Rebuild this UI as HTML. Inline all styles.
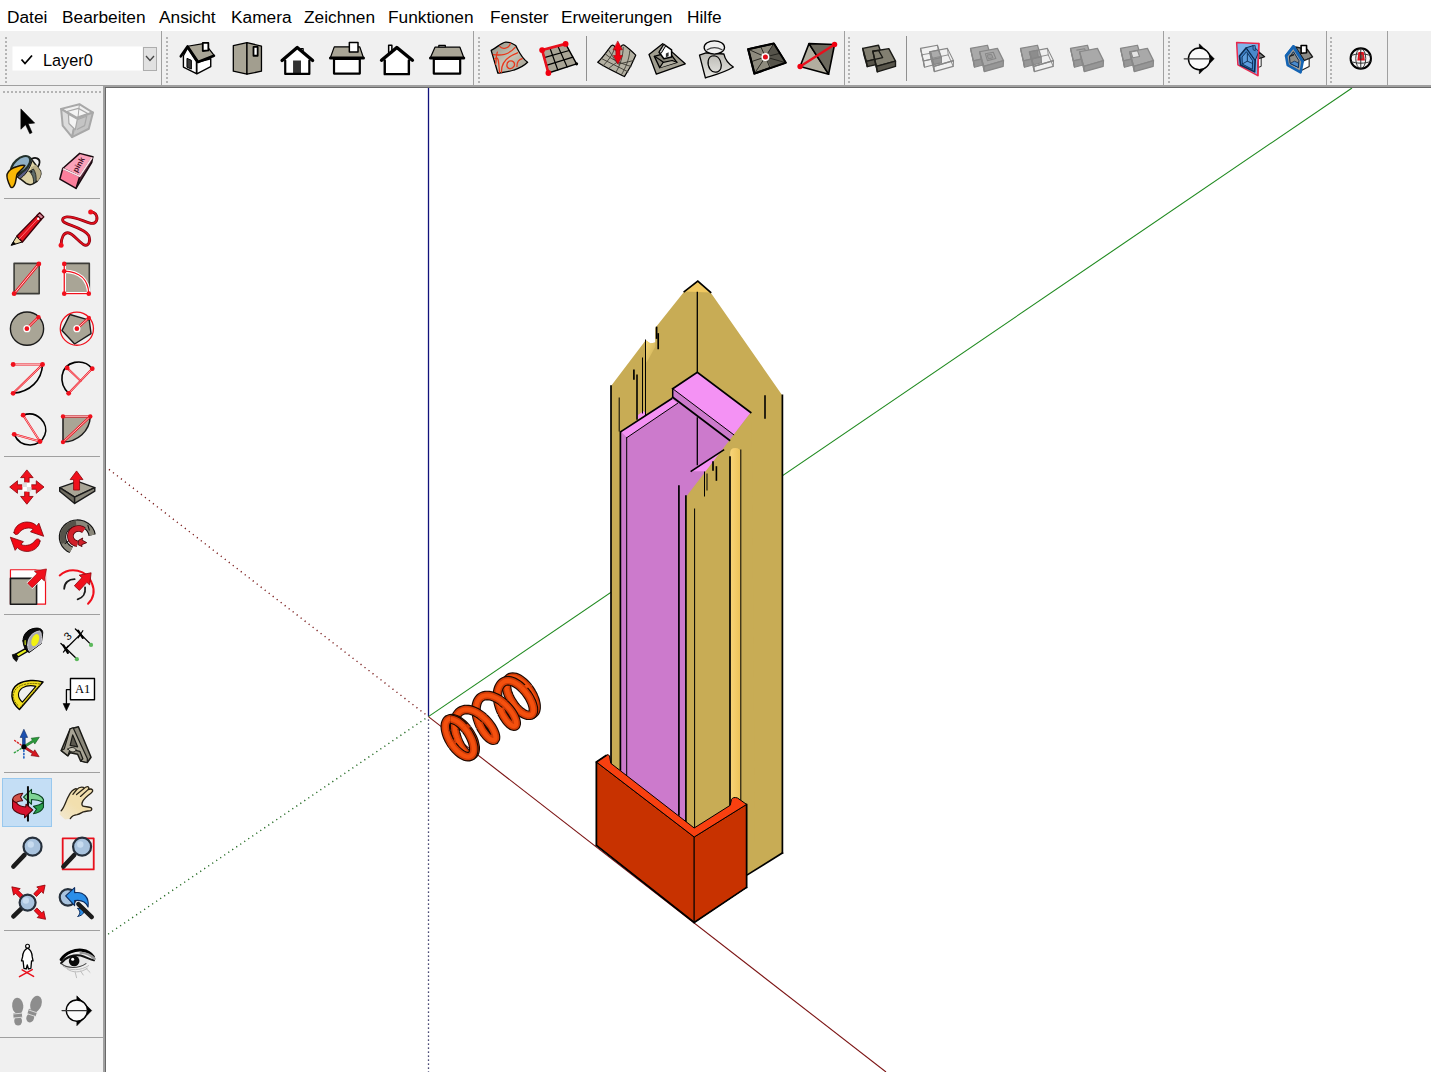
<!DOCTYPE html>
<html>
<head>
<meta charset="utf-8">
<style>
html,body{margin:0;padding:0;}
body{width:1431px;height:1072px;overflow:hidden;background:#f0f0f0;position:relative;font-family:"Liberation Sans",sans-serif;}
#menubar{position:absolute;left:0;top:0;width:1431px;height:31px;background:#fff;}
#menubar span{position:absolute;top:7.4px;font-size:17.3px;color:#000;white-space:nowrap;line-height:20px;}
#toolbar{position:absolute;left:0;top:31px;width:1431px;height:54px;background:#f0f0f0;}
#tbline{position:absolute;left:0;top:85px;width:1431px;height:1px;background:#a0a0a0;}
#fr1{position:absolute;left:103px;top:85px;width:1328px;height:987px;background:#a0a0a0;}
#fr2{position:absolute;left:105px;top:87px;width:1326px;height:985px;background:#696969;}
#left{position:absolute;left:0;top:86px;width:103px;height:986px;background:#f0f0f0;}
#vp{position:absolute;left:106px;top:88px;width:1325px;height:984px;background:#fff;overflow:hidden;}
.ico{position:absolute;}
.vsep{position:absolute;width:1px;background:#a0a0a0;}
.grip{position:absolute;width:2px;background-image:repeating-linear-gradient(to bottom,#b8b8b8 0,#b8b8b8 2px,transparent 2px,transparent 4px);}
.hgrip{position:absolute;height:2px;background-image:repeating-linear-gradient(to right,#b8b8b8 0,#b8b8b8 2px,transparent 2px,transparent 4px);}
.hsep{position:absolute;height:1px;background:#a0a0a0;left:6px;width:93px;}
</style>
</head>
<body>
<div id="menubar">
<span style="left:7px">Datei</span>
<span style="left:62px">Bearbeiten</span>
<span style="left:159px">Ansicht</span>
<span style="left:231px">Kamera</span>
<span style="left:304px">Zeichnen</span>
<span style="left:388px">Funktionen</span>
<span style="left:490px">Fenster</span>
<span style="left:561px">Erweiterungen</span>
<span style="left:687px">Hilfe</span>
</div>
<div id="toolbar">
<!--TOOLBAR-->
<svg width="1431" height="54" viewBox="0 31 1431 54" style="position:absolute;left:0;top:0">
<line x1="5.5" y1="37" x2="5.5" y2="83" stroke="#b4b4b4" stroke-width="2" stroke-dasharray="2 2" shape-rendering="crispEdges"/>
<line x1="161.5" y1="31" x2="161.5" y2="85" stroke="#a0a0a0" stroke-width="1" shape-rendering="crispEdges"/>
<line x1="473.5" y1="31" x2="473.5" y2="85" stroke="#a0a0a0" stroke-width="1" shape-rendering="crispEdges"/>
<line x1="844" y1="31" x2="844" y2="85" stroke="#a0a0a0" stroke-width="1" shape-rendering="crispEdges"/>
<line x1="1163.5" y1="31" x2="1163.5" y2="85" stroke="#a0a0a0" stroke-width="1" shape-rendering="crispEdges"/>
<line x1="1326" y1="31" x2="1326" y2="85" stroke="#a0a0a0" stroke-width="1" shape-rendering="crispEdges"/>
<line x1="1387.5" y1="31" x2="1387.5" y2="85" stroke="#a0a0a0" stroke-width="1" shape-rendering="crispEdges"/>
<line x1="166.5" y1="37" x2="166.5" y2="83" stroke="#b4b4b4" stroke-width="2" stroke-dasharray="2 2" shape-rendering="crispEdges"/>
<line x1="479" y1="37" x2="479" y2="83" stroke="#b4b4b4" stroke-width="2" stroke-dasharray="2 2" shape-rendering="crispEdges"/>
<line x1="849" y1="37" x2="849" y2="83" stroke="#b4b4b4" stroke-width="2" stroke-dasharray="2 2" shape-rendering="crispEdges"/>
<line x1="1169" y1="37" x2="1169" y2="83" stroke="#b4b4b4" stroke-width="2" stroke-dasharray="2 2" shape-rendering="crispEdges"/>
<line x1="1331" y1="37" x2="1331" y2="83" stroke="#b4b4b4" stroke-width="2" stroke-dasharray="2 2" shape-rendering="crispEdges"/>
<line x1="586.5" y1="36" x2="586.5" y2="81" stroke="#909090" stroke-width="1" shape-rendering="crispEdges"/>
<line x1="906.5" y1="36" x2="906.5" y2="81" stroke="#909090" stroke-width="1" shape-rendering="crispEdges"/>
<rect x="12.5" y="46.5" width="130" height="24" fill="#fff" stroke="none"/>
<rect x="143.5" y="47.5" width="13" height="23" fill="#e1e1e1" stroke="#adadad" stroke-width="1"/>
<polyline points="146,56 150,60.5 154,56" fill="none" stroke="#444" stroke-width="1.3"/>
<polyline points="21.5,59.5 25,63.5 32,55.5" fill="none" stroke="#000" stroke-width="1.8"/>
<text x="43" y="65.5" font-family="Liberation Sans, sans-serif" font-size="16.3" fill="#000">Layer0</text>
<polygon points="183.41,55.76 187.57,48.04 196.48,61.7 196.48,73.58 183.41,67.04" fill="#fff" stroke="#000" stroke-width="1.4" stroke-linejoin="round" />
<polygon points="196.84,62.29 210.74,58.73 210.74,66.69 196.84,73.82" fill="#fff" stroke="#000" stroke-width="1.4" stroke-linejoin="round" />
<polygon points="186.98,58.37 191.37,60.27 191.37,69.06 186.98,67.16" fill="#3a3a3a" stroke="#000" stroke-width="1" stroke-linejoin="round" />
<polygon points="187.57,46.26 204.8,43.29 214.3,55.52 198.02,61.94" fill="#a9a596" stroke="#000" stroke-width="1.2" stroke-linejoin="round" />
<polyline points="180.8,56.35 187.57,46.49 198.02,61.94 213.94,55.76" fill="none" stroke="#000" stroke-width="2.6" stroke-linejoin="round" stroke-linecap="round" />
<polygon points="202.78,42.93 208.36,42.93 208.36,50.41 202.78,51.01" fill="#fff" stroke="#000" stroke-width="1.8" stroke-linejoin="round" />
<polygon points="233.31,45.66 246.97,42.69 246.97,74.17 233.31,71.2" fill="#a9a596" stroke="#000" stroke-width="1.3" stroke-linejoin="round" />
<polygon points="246.97,42.69 261.46,46.02 261.46,71.2 246.97,74.17" fill="#a29e8f" stroke="#000" stroke-width="1.3" stroke-linejoin="round" />
<polygon points="253.5,46.85 257.66,46.85 257.66,55.76 253.5,55.76" fill="#fff" stroke="#000" stroke-width="1.8" stroke-linejoin="round" />
<polygon points="285.22,60.51 297.22,49.82 309.33,60.51 309.33,73.93 285.22,73.93" fill="#fff" stroke="none" stroke-width="0" stroke-linejoin="round" />
<polygon points="293.06,60.51 301.02,60.51 301.02,73.1 293.06,73.1" fill="#333" stroke="none" stroke-width="0" stroke-linejoin="round" />
<polyline points="285.22,60.51 285.22,73.93 309.33,73.93 309.33,60.51" fill="none" stroke="#000" stroke-width="2.2" stroke-linejoin="round" stroke-linecap="round" />
<polygon points="300.78,48.63 303.16,48.63 303.16,51.01 300.78,51.01" fill="#fff" stroke="#000" stroke-width="1.2" stroke-linejoin="round" />
<polyline points="282.01,60.51 297.22,47.44 312.66,60.51" fill="none" stroke="#000" stroke-width="3.2" stroke-linejoin="round" stroke-linecap="round" />
<polygon points="334.02,58.85 359.8,58.85 359.8,73.58 334.02,73.58" fill="#fff" stroke="#000" stroke-width="2.2" stroke-linejoin="round" />
<polygon points="334.26,46.85 359.8,46.85 363.36,57.54 330.45,57.54" fill="#a9a596" stroke="#000" stroke-width="1.2" stroke-linejoin="round" />
<polyline points="330.45,57.9 363.48,57.9" fill="none" stroke="#000" stroke-width="3" stroke-linejoin="round" stroke-linecap="round" />
<polygon points="349.34,42.45 358.01,42.45 358.01,51.96 349.34,51.96" fill="#fff" stroke="#000" stroke-width="1.5" stroke-linejoin="round" />
<polygon points="388.66,45.3 391.87,45.3 391.87,52.79 388.66,52.79" fill="#fff" stroke="#000" stroke-width="1.5" stroke-linejoin="round" />
<polygon points="384.74,60.51 396.86,49.82 408.86,60.51 408.86,74.17 384.74,74.17" fill="#fff" stroke="none" stroke-width="0" stroke-linejoin="round" />
<polyline points="384.74,60.51 384.74,74.17 408.86,74.17 408.86,60.51" fill="none" stroke="#000" stroke-width="2.4" stroke-linejoin="round" stroke-linecap="round" />
<polyline points="381.53,60.27 396.86,47.44 412.42,60.27" fill="none" stroke="#000" stroke-width="3.4" stroke-linejoin="round" stroke-linecap="round" />
<polygon points="438.79,45.3 445.33,45.3 445.33,47.44 438.79,47.44" fill="#fff" stroke="#000" stroke-width="1.2" stroke-linejoin="round" />
<polygon points="433.8,58.85 460.18,58.85 460.18,73.58 433.8,73.58" fill="#fff" stroke="#000" stroke-width="2.2" stroke-linejoin="round" />
<polygon points="434.99,47.21 459.94,47.21 463.74,57.54 430.48,57.54" fill="#a9a596" stroke="#000" stroke-width="1.2" stroke-linejoin="round" />
<polyline points="430.48,57.9 463.74,57.9" fill="none" stroke="#000" stroke-width="3" stroke-linejoin="round" stroke-linecap="round" />
<defs><linearGradient id="gterr" x1="0" y1="0" x2="1" y2="1"><stop offset="0" stop-color="#8f8c80"/><stop offset="0.5" stop-color="#c9c6b8"/><stop offset="1" stop-color="#9a978a"/></linearGradient><clipPath id="cterr"><path d="M 491.15,50.41 C 497.32,47.44 500.89,42.69 505.64,42.1 C 510.39,41.74 512.77,43.88 515.74,45.66 C 518.11,49.82 521.08,57.54 527.61,62.29 C 523.46,66.45 517.52,68.83 513.95,70.01 C 509.2,71.8 503.26,72.39 497.92,73.22 Z"/></clipPath></defs>
<path d="M 491.15,50.41 C 497.32,47.44 500.89,42.69 505.64,42.1 C 510.39,41.74 512.77,43.88 515.74,45.66 C 518.11,49.82 521.08,57.54 527.61,62.29 C 523.46,66.45 517.52,68.83 513.95,70.01 C 509.2,71.8 503.26,72.39 497.92,73.22 Z" fill="url(#gterr)" stroke="#000" stroke-width="1.3" stroke-linejoin="round" stroke-linecap="round" />
<g clip-path="url(#cterr)">
<path d="M 499.7,46.26 C 502.07,49.82 509.2,48.63 510.39,43.29" fill="none" stroke="#e8381c" stroke-width="1.3" stroke-linejoin="round" stroke-linecap="round" />
<path d="M 493.16,54.57 C 500.89,55.76 509.2,54.57 515.14,47.44" fill="none" stroke="#e8381c" stroke-width="1.3" stroke-linejoin="round" stroke-linecap="round" />
<path d="M 494.35,59.32 C 499.7,53.38 498.51,67.64 499.7,72.98" fill="none" stroke="#e8381c" stroke-width="1.3" stroke-linejoin="round" stroke-linecap="round" />
<path d="M 501.48,72.39 C 500.89,61.7 509.2,55.76 517.52,52.79" fill="none" stroke="#e8381c" stroke-width="1.3" stroke-linejoin="round" stroke-linecap="round" />
<path d="M 509.2,61.1 C 512.77,59.92 515.74,62.89 513.95,66.45 C 511.58,70.01 506.83,68.83 506.83,65.26 C 506.83,62.89 508.01,61.7 509.2,61.1" fill="none" stroke="#e8381c" stroke-width="1.3" stroke-linejoin="round" stroke-linecap="round" />
<path d="M 516.92,66.45 C 516.92,61.7 519.89,59.32 522.27,58.73" fill="none" stroke="#e8381c" stroke-width="1.3" stroke-linejoin="round" stroke-linecap="round" />
<path d="M 497.32,52.19 C 495.54,55.76 496.73,60.51 495.54,64.67" fill="none" stroke="#e8381c" stroke-width="1.3" stroke-linejoin="round" stroke-linecap="round" />
</g>
<polygon points="542.11,50.06 565.63,43.88 576.56,63.84 548.4,72.98" fill="#a9a596" stroke="#000" stroke-width="1.4" stroke-linejoin="round" />
<polyline points="549.95,48 557.79,69.93" fill="none" stroke="#000" stroke-width="1.2" stroke-linejoin="round" stroke-linecap="round" />
<polyline points="544.21,57.7 569.27,50.53" fill="none" stroke="#000" stroke-width="1.2" stroke-linejoin="round" stroke-linecap="round" />
<polyline points="557.79,45.94 567.17,66.89" fill="none" stroke="#000" stroke-width="1.2" stroke-linejoin="round" stroke-linecap="round" />
<polyline points="546.3,65.34 572.91,57.18" fill="none" stroke="#000" stroke-width="1.2" stroke-linejoin="round" stroke-linecap="round" />
<polyline points="548.4,72.98 542.11,50.06 565.63,43.88" fill="none" stroke="#e8101c" stroke-width="2.6" stroke-linejoin="round" stroke-linecap="round" />
<circle cx="542.11" cy="50.06" r="2.9" fill="#f00010" stroke="none" stroke-width="0"/>
<circle cx="565.63" cy="43.88" r="2.9" fill="#f00010" stroke="none" stroke-width="0"/>
<circle cx="548.4" cy="72.98" r="2.9" fill="#f00010" stroke="none" stroke-width="0"/>
<circle cx="576.56" cy="63.84" r="1.6" fill="#000" stroke="none" stroke-width="0"/>
<path d="M 597.7,62.29 C 603.05,57.54 607.8,49.82 611.36,45.66 C 614.33,43.88 615.52,47.44 617.3,54.57 C 619.68,47.44 622.06,43.88 624.43,45.3 C 629.18,48.63 632.75,52.19 635.72,55.16 C 632.75,62.89 627.99,71.2 624.43,76.55 C 616.12,72.39 605.42,67.64 597.7,62.29 Z" fill="#b3b0a2" stroke="#000" stroke-width="1.2" stroke-linejoin="round" stroke-linecap="round" />
<path d="M 601.86,58.73 C 610.18,62.89 619.68,67.64 627.99,71.8" fill="none" stroke="#3c3a32" stroke-width="0.9" stroke-linejoin="round" stroke-linecap="round" />
<path d="M 605.42,53.98 C 612.55,60.51 623.24,64.07 630.96,66.45" fill="none" stroke="#3c3a32" stroke-width="0.9" stroke-linejoin="round" stroke-linecap="round" />
<path d="M 608.39,49.82 C 612.55,55.76 616.12,62.89 618.49,64.07 C 623.24,62.89 629.18,61.7 633.7,60.51" fill="none" stroke="#3c3a32" stroke-width="0.9" stroke-linejoin="round" stroke-linecap="round" />
<path d="M 603.05,65.86 C 607.8,60.51 612.55,55.76 614.33,48.63" fill="none" stroke="#3c3a32" stroke-width="0.9" stroke-linejoin="round" stroke-linecap="round" />
<path d="M 608.99,68.23 C 613.74,64.07 616.71,62.89 617.9,61.7" fill="none" stroke="#3c3a32" stroke-width="0.9" stroke-linejoin="round" stroke-linecap="round" />
<path d="M 616.12,71.8 C 619.68,66.45 623.24,55.76 623.24,47.44" fill="none" stroke="#3c3a32" stroke-width="0.9" stroke-linejoin="round" stroke-linecap="round" />
<path d="M 621.46,74.77 C 625.62,67.64 629.18,59.32 629.78,51.01" fill="none" stroke="#3c3a32" stroke-width="0.9" stroke-linejoin="round" stroke-linecap="round" />
<path d="M 617.9,41.27 L 622.41,49.82 L 619.92,49.82 L 619.92,55.52 L 622.41,55.52 L 617.9,64.07 L 613.38,55.52 L 615.88,55.52 L 615.88,49.82 L 613.38,49.82 Z" fill="#f00010" stroke="#a00008" stroke-width="0.6" stroke-linejoin="round" stroke-linecap="round" />
<polygon points="649.01,54.57 662.67,43.64 685.24,63.84 656.37,74.17" fill="#a19e90" stroke="#000" stroke-width="1.3" stroke-linejoin="round" />
<path d="M 654.35,56.35 L 669.2,52.19 L 676.92,62.29 L 659.7,67.64 Z" fill="#8a877a" stroke="#000" stroke-width="1.3" stroke-linejoin="round" stroke-linecap="round" />
<path d="M 659.7,67.64 L 663.26,62.29 L 672.17,60.51 L 676.92,62.29" fill="#b5b2a4" stroke="#000" stroke-width="1.2" stroke-linejoin="round" stroke-linecap="round" />
<path d="M 654.35,56.35 L 660.29,59.92 L 663.26,62.29" fill="none" stroke="#000" stroke-width="1.2" stroke-linejoin="round" stroke-linecap="round" />
<polygon points="659.1,52.19 663.86,44.47 671.58,49.82 671.58,56.95 663.86,58.73" fill="#fff" stroke="#000" stroke-width="1.5" stroke-linejoin="round" />
<polygon points="659.1,52.19 663.86,44.47 665.64,46.02 661.12,53.38" fill="#c9c9c9" stroke="#000" stroke-width="1" stroke-linejoin="round" />
<polygon points="665.88,53.38 668.61,52.19 668.61,56.35 665.88,57.18" fill="#333" stroke="none" stroke-width="0" stroke-linejoin="round" />
<defs><linearGradient id="gdr" x1="0" y1="0" x2="0" y2="1"><stop offset="0" stop-color="#b9b8b2"/><stop offset="1" stop-color="#e8e8e4"/></linearGradient></defs>
<path d="M 699.49,55.16 L 706.03,52.79 L 723.85,53.98 C 725.03,59.32 728.6,64.07 733.35,67.04 C 725.03,72.39 715.53,74.77 705.43,77.97 Z" fill="url(#gdr)" stroke="#000" stroke-width="1.3" stroke-linejoin="round" stroke-linecap="round" />
<path d="M 714.11,55.76 C 720.28,56.35 722.06,64.07 720.88,68.23 C 719.09,72.98 713.16,73.58 710.19,69.42 C 706.62,64.07 707.22,55.76 714.11,55.76 Z" fill="none" stroke="#000" stroke-width="1.2" stroke-linejoin="round" stroke-linecap="round" />
<ellipse cx="714.34" cy="47.44" rx="10.2" ry="6.6" fill="#efefef" stroke="#000" stroke-width="1.3"/>
<path d="M 707.22,49.82 C 711.97,46.85 717.91,47.44 722.06,49.82" fill="none" stroke="#444" stroke-width="1.2" stroke-linejoin="round" stroke-linecap="round" />
<polygon points="748.2,49.22 773.74,43.52 785.62,62.65 754.38,73.58" fill="#8e8b7e" stroke="#000" stroke-width="2.2" stroke-linejoin="round" />
<polygon points="765.42,56.95 773.74,43.52 785.62,62.65 771.36,67.64" fill="#55534a" stroke="none" stroke-width="0" stroke-linejoin="round" />
<polyline points="765.42,56.95 748.2,49.22" fill="none" stroke="#1e1e1a" stroke-width="0.9" stroke-linejoin="round" stroke-linecap="round" />
<polyline points="765.42,56.95 773.74,43.52" fill="none" stroke="#1e1e1a" stroke-width="0.9" stroke-linejoin="round" stroke-linecap="round" />
<polyline points="765.42,56.95 785.62,62.65" fill="none" stroke="#1e1e1a" stroke-width="0.9" stroke-linejoin="round" stroke-linecap="round" />
<polyline points="765.42,56.95 754.38,73.58" fill="none" stroke="#1e1e1a" stroke-width="0.9" stroke-linejoin="round" stroke-linecap="round" />
<polyline points="765.42,56.95 760.67,46.49" fill="none" stroke="#1e1e1a" stroke-width="0.9" stroke-linejoin="round" stroke-linecap="round" />
<polyline points="765.42,56.95 751.17,61.7" fill="none" stroke="#1e1e1a" stroke-width="0.9" stroke-linejoin="round" stroke-linecap="round" />
<polyline points="765.42,56.95 770.18,68.23" fill="none" stroke="#1e1e1a" stroke-width="0.9" stroke-linejoin="round" stroke-linecap="round" />
<polyline points="765.42,56.95 779.68,53.38" fill="none" stroke="#1e1e1a" stroke-width="0.9" stroke-linejoin="round" stroke-linecap="round" />
<circle cx="765.42" cy="56.95" r="4.0" fill="#fff" stroke="none" stroke-width="0"/>
<circle cx="765.42" cy="56.95" r="2.5" fill="#e0101c" stroke="none" stroke-width="0"/>
<polygon points="748.2,49.22 773.74,43.52 785.62,62.65 754.38,73.58" fill="none" stroke="#000" stroke-width="1.8" stroke-linejoin="round" />
<polygon points="809.01,43.64 800.1,66.45 828.61,74.17" fill="#b2ae9f" stroke="#000" stroke-width="1.6" stroke-linejoin="round" />
<polygon points="809.01,43.64 834.55,44.47 828.61,74.17" fill="#6c695d" stroke="#000" stroke-width="1.6" stroke-linejoin="round" />
<polyline points="800.1,66.45 834.55,44.47" fill="none" stroke="#e8101c" stroke-width="2.4" stroke-linejoin="round" stroke-linecap="round" />
<circle cx="800.1" cy="66.45" r="2.7" fill="#f00010" stroke="none" stroke-width="0"/>
<circle cx="834.55" cy="44.47" r="2.7" fill="#f00010" stroke="none" stroke-width="0"/>
<polygon points="862.7,48.39 878.5,45.3 882.66,57.54 866.27,61.34" fill="#827f71" stroke="#1a1a16" stroke-width="1.4" stroke-linejoin="round" />
<polygon points="866.27,61.34 882.66,57.54 882.9,63.12 867.22,66.69" fill="#58554b" stroke="#1a1a16" stroke-width="1.4" stroke-linejoin="round" />
<polygon points="862.7,48.39 866.27,61.34 867.22,66.69 863.89,55.16" fill="#6e6b5e" stroke="#1a1a16" stroke-width="1.2" stroke-linejoin="round" />
<polygon points="872.8,51.24 888.84,48.63 895.49,61.1 876.36,66.45" fill="#827f71" stroke="#1a1a16" stroke-width="1.4" stroke-linejoin="round" />
<polygon points="876.36,66.45 895.49,61.1 895.49,66.45 877.31,71.8" fill="#58554b" stroke="#1a1a16" stroke-width="1.4" stroke-linejoin="round" />
<polygon points="872.8,51.24 876.36,66.45 877.31,71.8 874.58,59.92" fill="#6e6b5e" stroke="#1a1a16" stroke-width="1.2" stroke-linejoin="round" />
<polyline points="872.8,51.24 878.5,50.41 882.66,57.54 874.94,59.32" fill="none" stroke="#1a1a16" stroke-width="1.3" stroke-linejoin="round" stroke-linecap="round" />
<polygon points="920.48,48.37 937.46,45.22 941.13,56.96 923.42,60.95" fill="none" stroke="#878787" stroke-width="1.1" stroke-linejoin="round" />
<polygon points="923.42,60.95 941.13,56.96 941.45,62.73 924.47,67.24" fill="none" stroke="#878787" stroke-width="1.1" stroke-linejoin="round" />
<polygon points="920.48,48.37 923.42,60.95 924.47,67.24 921.74,54.87" fill="none" stroke="#878787" stroke-width="1.0" stroke-linejoin="round" />
<polyline points="921.74,54.87 938.51,51.72 941.45,62.73" fill="none" stroke="#878787" stroke-width="0.9" stroke-linejoin="round" stroke-linecap="round" />
<polyline points="938.51,51.72 937.46,45.22" fill="none" stroke="#878787" stroke-width="0.9" stroke-linejoin="round" stroke-linecap="round" />
<polygon points="930.44,51.72 938.3,50.15 941.45,57.49 932.54,59.58" fill="#ababab" stroke="#878787" stroke-width="1.1" stroke-linejoin="round" />
<polygon points="932.54,59.58 941.45,57.49 941.45,62.73 933.27,64.3" fill="#969696" stroke="#878787" stroke-width="1.1" stroke-linejoin="round" />
<polygon points="930.44,51.72 932.54,59.58 933.27,64.3 931.49,56.96" fill="#9e9e9e" stroke="#878787" stroke-width="1.0" stroke-linejoin="round" />
<polygon points="929.6,51.72 947.42,48.37 953.5,60.63 933.79,66.4" fill="none" stroke="#878787" stroke-width="1.1" stroke-linejoin="round" />
<polygon points="933.79,66.4 953.5,60.63 953.19,66.4 934.32,71.64" fill="none" stroke="#878787" stroke-width="1.1" stroke-linejoin="round" />
<polygon points="929.6,51.72 933.79,66.4 934.32,71.64 930.86,58.54" fill="none" stroke="#878787" stroke-width="1.0" stroke-linejoin="round" />
<polyline points="930.86,58.54 948.26,54.87 953.19,66.4" fill="none" stroke="#878787" stroke-width="0.9" stroke-linejoin="round" stroke-linecap="round" />
<polyline points="948.26,54.87 947.42,48.37" fill="none" stroke="#878787" stroke-width="0.9" stroke-linejoin="round" stroke-linecap="round" />
<polygon points="970.48,48.37 987.46,45.22 991.13,56.96 973.42,60.95" fill="#a9a9a9" stroke="#878787" stroke-width="1.2" stroke-linejoin="round" />
<polygon points="973.42,60.95 991.13,56.96 991.45,62.73 974.47,67.24" fill="#979797" stroke="#878787" stroke-width="1.2" stroke-linejoin="round" />
<polygon points="970.48,48.37 973.42,60.95 974.47,67.24 971.74,54.87" fill="#979797" stroke="#878787" stroke-width="1.0" stroke-linejoin="round" />
<polygon points="979.6,51.72 997.42,48.37 1003.5,60.63 983.79,66.4" fill="#a9a9a9" stroke="#878787" stroke-width="1.2" stroke-linejoin="round" />
<polygon points="983.79,66.4 1003.5,60.63 1003.19,66.4 984.32,71.64" fill="#979797" stroke="#878787" stroke-width="1.2" stroke-linejoin="round" />
<polygon points="979.6,51.72 983.79,66.4 984.32,71.64 980.86,58.54" fill="#979797" stroke="#878787" stroke-width="1.0" stroke-linejoin="round" />
<polygon points="985.37,53.82 993.23,52.25 995.85,58.54 987.46,60.63" fill="none" stroke="#878787" stroke-width="1.1" stroke-linejoin="round" />
<polygon points="987.04,55.08 991.45,54.24 993.02,57.8 988.51,58.85" fill="#9d9d9d" stroke="#878787" stroke-width="1.0" stroke-linejoin="round" />
<polygon points="1020.48,48.37 1037.46,45.22 1041.13,56.96 1023.42,60.95" fill="#a9a9a9" stroke="#878787" stroke-width="1.2" stroke-linejoin="round" />
<polygon points="1023.42,60.95 1041.13,56.96 1041.45,62.73 1024.47,67.24" fill="#979797" stroke="#878787" stroke-width="1.2" stroke-linejoin="round" />
<polygon points="1020.48,48.37 1023.42,60.95 1024.47,67.24 1021.74,54.87" fill="#979797" stroke="#878787" stroke-width="1.0" stroke-linejoin="round" />
<polygon points="1029.08,51.72 1037.46,50.15 1038.3,56.96 1031.49,59.58" fill="#8d8d8d" stroke="#878787" stroke-width="1.0" stroke-linejoin="round" />
<polygon points="1029.6,51.72 1047.42,48.37 1053.5,60.63 1033.79,66.4" fill="none" stroke="#878787" stroke-width="1.1" stroke-linejoin="round" />
<polygon points="1033.79,66.4 1053.5,60.63 1053.19,66.4 1034.32,71.64" fill="none" stroke="#878787" stroke-width="1.1" stroke-linejoin="round" />
<polygon points="1029.6,51.72 1033.79,66.4 1034.32,71.64 1030.86,58.54" fill="none" stroke="#878787" stroke-width="1.0" stroke-linejoin="round" />
<polyline points="1030.86,58.54 1048.26,54.87 1053.19,66.4" fill="none" stroke="#878787" stroke-width="0.9" stroke-linejoin="round" stroke-linecap="round" />
<polyline points="1048.26,54.87 1047.42,48.37" fill="none" stroke="#878787" stroke-width="0.9" stroke-linejoin="round" stroke-linecap="round" />
<polygon points="1070.48,48.37 1087.46,45.22 1091.13,56.96 1073.42,60.95" fill="#a9a9a9" stroke="#878787" stroke-width="1.2" stroke-linejoin="round" />
<polygon points="1073.42,60.95 1091.13,56.96 1091.45,62.73 1074.47,67.24" fill="#979797" stroke="#878787" stroke-width="1.2" stroke-linejoin="round" />
<polygon points="1070.48,48.37 1073.42,60.95 1074.47,67.24 1071.74,54.87" fill="#979797" stroke="#878787" stroke-width="1.0" stroke-linejoin="round" />
<polyline points="1076.77,50.15 1084.63,48.79 1086.21,53.3" fill="none" stroke="#878787" stroke-width="1.1" stroke-linejoin="round" stroke-linecap="round" />
<polygon points="1079.6,51.72 1097.42,48.37 1103.5,60.63 1083.79,66.4" fill="#a9a9a9" stroke="#878787" stroke-width="1.2" stroke-linejoin="round" />
<polygon points="1083.79,66.4 1103.5,60.63 1103.19,66.4 1084.32,71.64" fill="#979797" stroke="#878787" stroke-width="1.2" stroke-linejoin="round" />
<polygon points="1079.6,51.72 1083.79,66.4 1084.32,71.64 1080.86,58.54" fill="#979797" stroke="#878787" stroke-width="1.0" stroke-linejoin="round" />
<polygon points="1120.48,48.37 1137.46,45.22 1141.13,56.96 1123.42,60.95" fill="#a9a9a9" stroke="#878787" stroke-width="1.2" stroke-linejoin="round" />
<polygon points="1123.42,60.95 1141.13,56.96 1141.45,62.73 1124.47,67.24" fill="#979797" stroke="#878787" stroke-width="1.2" stroke-linejoin="round" />
<polygon points="1120.48,48.37 1123.42,60.95 1124.47,67.24 1121.74,54.87" fill="#979797" stroke="#878787" stroke-width="1.0" stroke-linejoin="round" />
<polygon points="1129.6,51.72 1147.42,48.37 1153.5,60.63 1133.79,66.4" fill="#a9a9a9" stroke="#878787" stroke-width="1.2" stroke-linejoin="round" />
<polygon points="1133.79,66.4 1153.5,60.63 1153.19,66.4 1134.32,71.64" fill="#979797" stroke="#878787" stroke-width="1.2" stroke-linejoin="round" />
<polygon points="1129.6,51.72 1133.79,66.4 1134.32,71.64 1130.86,58.54" fill="#979797" stroke="#878787" stroke-width="1.0" stroke-linejoin="round" />
<polygon points="1130.96,51.93 1137.46,50.68 1139.56,56.44 1132.85,57.8" fill="#e4e4e4" stroke="#878787" stroke-width="1.1" stroke-linejoin="round" />
<polygon points="1199.32,43.86 1214.31,58.85 1199.32,73.95" fill="#000" stroke="#000" stroke-width="0.5" stroke-linejoin="round" />
<circle cx="1199.32" cy="58.85" r="10.9" fill="#fafafa" stroke="#000" stroke-width="1.4"/>
<polyline points="1184.22,58.85 1209.8,58.85" fill="none" stroke="#333" stroke-width="1.3" stroke-linejoin="round" stroke-linecap="round" />
<polygon points="1236.64,42.5 1258.86,43.55 1257.81,75.62 1237.89,64.83" fill="#7fb4ea" stroke="#e8284c" stroke-width="1.5" stroke-linejoin="round" />
<polygon points="1239.47,55.92 1246.28,47.74 1255.19,60.32 1254.66,71.85 1240.51,65.04" fill="#3f82c8" stroke="#0a2a50" stroke-width="1.6" stroke-linejoin="round" />
<polygon points="1242.09,56.96 1246.49,51.72 1252.57,60.63 1252.36,69.33 1242.3,64.09" fill="#5c9cdc" stroke="#0a2a50" stroke-width="0.9" stroke-linejoin="round" />
<polyline points="1242.09,64.09 1247.33,61.16 1252.36,63.46" fill="none" stroke="#0a2a50" stroke-width="0.9" stroke-linejoin="round" stroke-linecap="round" />
<polyline points="1247.33,61.16 1247.33,53.82" fill="none" stroke="#0a2a50" stroke-width="0.9" stroke-linejoin="round" stroke-linecap="round" />
<polygon points="1246.28,47.74 1253.09,45.64 1258.86,51.72 1255.19,60.32" fill="#4a8acc" stroke="#0a2a50" stroke-width="1.0" stroke-linejoin="round" />
<polygon points="1253.09,45.64 1255.19,45.64 1255.19,50.68 1253.09,49.63" fill="#5c9cdc" stroke="#0a2a50" stroke-width="0.8" stroke-linejoin="round" />
<polygon points="1258.54,51.72 1264.62,56.75 1258.54,58.85" fill="#777" stroke="#111" stroke-width="1.2" stroke-linejoin="round" />
<polygon points="1258.54,58.85 1261.16,58.01 1261.16,66.4 1258.02,67.45" fill="#fff" stroke="#222" stroke-width="1" stroke-linejoin="round" />
<polyline points="1258.86,43.55 1257.81,75.62" fill="none" stroke="#e8284c" stroke-width="1.5" stroke-linejoin="round" stroke-linecap="round" />
<polygon points="1295.55,47.01 1307.29,49.42 1312.53,56.96 1304.45,60.95" fill="#8a8a86" stroke="#1a1a1a" stroke-width="1.4" stroke-linejoin="round" />
<polygon points="1301.1,45.43 1306.55,45.43 1306.55,52.77 1301.1,53.3" fill="#fff" stroke="#000" stroke-width="1.6" stroke-linejoin="round" />
<polygon points="1302.36,61.37 1309.17,58.54 1309.17,66.61 1300.79,70.8" fill="#fff" stroke="#222" stroke-width="1.1" stroke-linejoin="round" />
<polygon points="1286.11,55.92 1293.45,46.48 1302.67,61.37 1300.58,72.37 1287.68,65.04" fill="#9b9b98" stroke="#1464b4" stroke-width="2.6" stroke-linejoin="round" />
<polygon points="1289.47,56.96 1293.45,51.72 1298.9,60.63 1298.48,67.45 1290.09,63.46" fill="#8c8c88" stroke="#0a2a50" stroke-width="1.0" stroke-linejoin="round" />
<polygon points="1290.09,63.46 1294.5,61.16 1298.48,63.04 1298.48,67.45" fill="#4a8acc" stroke="#0a2a50" stroke-width="0.8" stroke-linejoin="round" />
<polygon points="1289.47,55.39 1293.97,53.82 1293.97,55.39 1289.47,56.96" fill="#222" stroke="none" stroke-width="0" stroke-linejoin="round" />
<polyline points="1286.11,55.92 1293.45,46.48 1302.67,61.37" fill="none" stroke="#1464b4" stroke-width="2.8" stroke-linejoin="round" stroke-linecap="round" />
<circle cx="1360.76" cy="58.52" r="10.2" fill="#f4f4f4" stroke="#000" stroke-width="2"/>
<ellipse cx="1360.76" cy="58.52" rx="5" ry="10" fill="none" stroke="#222" stroke-width="0.9"/>
<path d="M 1350.91,55.67 C 1356.97,53.21 1364.55,53.21 1370.61,55.67" fill="none" stroke="#222" stroke-width="0.9" stroke-linejoin="round" stroke-linecap="round" />
<path d="M 1350.53,61.36 C 1356.97,63.82 1364.55,63.82 1370.98,61.36" fill="none" stroke="#222" stroke-width="0.9" stroke-linejoin="round" stroke-linecap="round" />
<polygon points="1358.48,51.89 1363.6,51.89 1364.92,60.41 1357.35,60.41" fill="#e0101c" stroke="none" stroke-width="0" stroke-linejoin="round" />
<polygon points="1359.81,54.73 1362.65,54.73 1363.03,58.52 1359.24,58.52" fill="#8a5a50" stroke="none" stroke-width="0" stroke-linejoin="round" />
<path d="M 1360.76,48.67 L 1360.76,68.36" fill="none" stroke="#222" stroke-width="0.9" stroke-linejoin="round" stroke-linecap="round" />
</svg>
<!--/TOOLBAR-->
</div>
<div id="tbline"></div>
<div id="left">
<!--LEFT-->
<svg width="103" height="986" viewBox="0 86 103 986" style="position:absolute;left:0;top:0">
<line x1="3" y1="91.5" x2="101" y2="91.5" stroke="#b4b4b4" stroke-width="2" stroke-dasharray="2 2" shape-rendering="crispEdges"/>
<line x1="4" y1="198.5" x2="100" y2="198.5" stroke="#a0a0a0" stroke-width="1" shape-rendering="crispEdges"/>
<line x1="4" y1="456.5" x2="100" y2="456.5" stroke="#a0a0a0" stroke-width="1" shape-rendering="crispEdges"/>
<line x1="4" y1="614.5" x2="100" y2="614.5" stroke="#a0a0a0" stroke-width="1" shape-rendering="crispEdges"/>
<line x1="4" y1="772.5" x2="100" y2="772.5" stroke="#a0a0a0" stroke-width="1" shape-rendering="crispEdges"/>
<line x1="4" y1="930.5" x2="100" y2="930.5" stroke="#a0a0a0" stroke-width="1" shape-rendering="crispEdges"/>
<line x1="0" y1="1037.5" x2="104" y2="1037.5" stroke="#a0a0a0" stroke-width="1" shape-rendering="crispEdges"/>
<polygon points="20.89,108.89 20.89,129.26 25.59,124.77 29.77,133.65 32.07,132.6 28.2,123.73 34.68,123.1" fill="#000" stroke="#000" stroke-width="0.6" stroke-linejoin="round" />
<polygon points="61.11,108.89 79.39,104.19 92.97,112.55 76.26,118.29" fill="none" stroke="#a8a8a8" stroke-width="2" stroke-linejoin="round" />
<polygon points="61.11,108.89 76.26,118.29 72.08,137.1 62.68,125.61" fill="#dcdcdc" stroke="#a8a8a8" stroke-width="2" stroke-linejoin="round" />
<polygon points="76.26,118.29 92.97,112.55 88.79,128.74 72.08,137.1" fill="#c4c4c4" stroke="#a8a8a8" stroke-width="2" stroke-linejoin="round" />
<polygon points="66.85,111.5 78.35,108.37 87.75,113.59 76.78,117.25" fill="#f4f4f4" stroke="#a8a8a8" stroke-width="1.2" stroke-linejoin="round" />
<polygon points="68.42,114.12 77.3,119.34 75.21,129.78 68.94,123.52" fill="#f4f4f4" stroke="#a8a8a8" stroke-width="1.2" stroke-linejoin="round" />
<polyline points="77.82,119.34 86.7,116.2 84.61,125.61 77.3,129.26" fill="none" stroke="#a8a8a8" stroke-width="1.2" stroke-linejoin="round" stroke-linecap="round" />
<polyline points="79.39,104.19 77.82,119.34" fill="none" stroke="#a8a8a8" stroke-width="1" stroke-linejoin="round" stroke-linecap="round" />
<path d="M 31.87,158.85 C 35.53,156.76 39.71,158.58 39.6,162.24 C 39.45,165.9 36.57,168.51 33.44,169.56" fill="none" stroke="#111" stroke-width="1.7" stroke-linejoin="round" stroke-linecap="round" />
<path d="M 30.56,158.06 L 40.49,171.12 C 41.8,174.26 39.71,180.53 33.44,183.66 C 30.83,185.23 28.21,184.71 26.12,183.4 L 17.5,176.61 Z" fill="#ddd2a4" stroke="#1a1a14" stroke-width="1.5" stroke-linejoin="round" stroke-linecap="round" />
<path d="M 30.83,167.47 L 36.05,164.85 L 40.49,171.12 C 41.54,174.26 40.23,178.44 37.62,181.05 L 33.44,178.44 Z" fill="#b9ae86" stroke="none" stroke-width="0" stroke-linejoin="round" stroke-linecap="round" />
<path d="M 29.26,171.38 L 33.44,169.03 C 35.53,172.17 36.57,176.35 36.05,181.57 L 33.44,183.4 C 33.96,178.44 32.39,174.26 29.26,171.38 Z" fill="#5d6a68" stroke="#1a1a14" stroke-width="0.8" stroke-linejoin="round" stroke-linecap="round" />
<path d="M 17.5,176.61 C 21.94,174.26 27.17,168.51 30.56,158.06 L 32.13,160.67 C 29.78,169.56 24.56,175.83 20.11,178.7 Z" fill="#595d84" stroke="#1a1a14" stroke-width="1.0" stroke-linejoin="round" stroke-linecap="round" />
<ellipse cx="20.64" cy="165.11" rx="11.6" ry="6.4" transform="rotate(-42 20.64 165.11)" fill="#8fb0c6" stroke="#22302a" stroke-width="2.2"/>
<circle cx="31.35" cy="171.65" r="1.0" fill="#111" stroke="none" stroke-width="0"/>
<path d="M 7.05,174.26 C 8.36,170.6 13.06,167.47 17.24,166.42 C 19.85,165.64 22.47,165.11 24.82,165.48 C 23.51,167.99 19.85,171.12 17.5,173.47 C 15.67,176.35 16.72,181.57 14.11,185.75 C 13.06,187.84 11.23,188.1 10.19,186.27 C 8.36,182.62 6.27,178.44 7.05,174.26 Z" fill="#f9b806" stroke="#1a1206" stroke-width="1.5" stroke-linejoin="round" stroke-linecap="round" />
<polygon points="79.69,176.35 92.75,156.76 91.81,162.24 76.03,188.36" fill="#5a2c3c" stroke="#1a0a10" stroke-width="1.5" stroke-linejoin="round" />
<polygon points="62.71,168.51 79.69,153.36 92.75,156.76 79.69,176.35" fill="#fba2ba" stroke="#1a0a10" stroke-width="1.5" stroke-linejoin="round" />
<polygon points="62.71,168.51 79.69,176.35 76.03,188.36 59.84,179.22" fill="#fb7f9c" stroke="#1a0a10" stroke-width="1.5" stroke-linejoin="round" />
<polyline points="63.6,169.03 79.59,176.35 91.81,157.96" fill="none" stroke="#fde0e8" stroke-width="1.7" stroke-linejoin="round" stroke-linecap="round" />
<text x="78.38" y="164.44" font-family="Liberation Sans, sans-serif" font-size="7.8" font-weight="bold" fill="#4a1428" text-anchor="middle" transform="rotate(-60 78.38 164.44) translate(0 3)">pink</text>
<polygon points="11.28,245.31 16.71,236.22 22.46,241.96" fill="#ead9a4" stroke="#000" stroke-width="1" stroke-linejoin="round" />
<polygon points="11.28,245.31 13.37,241.75 15.46,243.84" fill="#000" stroke="#000" stroke-width="0.5" stroke-linejoin="round" />
<polygon points="16.71,236.22 37.08,215.33 41.26,219.5 22.46,241.96" fill="#e0101c" stroke="#3a0008" stroke-width="1.3" stroke-linejoin="round" />
<polyline points="19.33,238.83 39.17,217.41" fill="none" stroke="#ff6a70" stroke-width="1" stroke-linejoin="round" stroke-linecap="round" />
<polygon points="37.08,215.33 39.69,212.71 43.87,216.89 41.26,219.5" fill="#d98a9c" stroke="#3a0008" stroke-width="1.3" stroke-linejoin="round" />
<circle cx="38.23" cy="218.77" r="1.2" fill="#fff" stroke="none" stroke-width="0"/>
<path d="M 61.11,245.1 C 61.11,237.78 63.72,232.56 67.9,232.77 C 73.12,233.08 79.39,243.01 84.61,245.1 C 88.79,246.14 90.88,240.92 88.79,235.69 C 85.66,229.43 73.12,226.29 65.81,223.16 C 61.11,221.07 61.63,217.41 66.85,216.89 C 75.21,216.37 83.57,221.59 90.88,223.37 C 96.63,224.2 98.72,218.46 95.58,213.97 C 94.01,212.19 92.45,211.67 90.67,211.88" fill="none" stroke="#8a0010" stroke-width="2.8" stroke-linejoin="round" stroke-linecap="round" />
<path d="M 61.11,245.1 C 61.11,237.78 63.72,232.56 67.9,232.77 C 73.12,233.08 79.39,243.01 84.61,245.1 C 88.79,246.14 90.88,240.92 88.79,235.69 C 85.66,229.43 73.12,226.29 65.81,223.16 C 61.11,221.07 61.63,217.41 66.85,216.89 C 75.21,216.37 83.57,221.59 90.88,223.37 C 96.63,224.2 98.72,218.46 95.58,213.97 C 94.01,212.19 92.45,211.67 90.67,211.88" fill="none" stroke="#e0101c" stroke-width="1.5" stroke-linejoin="round" stroke-linecap="round" />
<circle cx="61.11" cy="245.31" r="2.5" fill="#f0101c" stroke="none" stroke-width="0"/>
<circle cx="90.67" cy="211.88" r="2.5" fill="#f0101c" stroke="none" stroke-width="0"/>
<polygon points="14.1,263.38 39.17,263.38 39.17,293.67 14.1,293.67" fill="#a9a596" stroke="#3c3c38" stroke-width="1.6" stroke-linejoin="round" />
<polyline points="14.1,293.67 38.86,263.9" fill="none" stroke="#f0101c" stroke-width="2.6" stroke-linejoin="round" stroke-linecap="round" />
<polyline points="14.1,293.67 38.86,263.9" fill="none" stroke="#fff" stroke-width="0.8580000000000001" stroke-linejoin="round" stroke-linecap="round" />
<circle cx="14.1" cy="293.67" r="2.4" fill="#f0101c" stroke="none" stroke-width="0"/>
<circle cx="38.86" cy="263.9" r="2.4" fill="#f0101c" stroke="none" stroke-width="0"/>
<polygon points="64.24,263.38 89.31,263.38 89.31,293.67 64.24,293.67" fill="#a9a596" stroke="#3c3c38" stroke-width="1.6" stroke-linejoin="round" />
<path d="M 64.24,271.21 C 79.39,271.73 88.27,279.57 88.79,293.67" fill="none" stroke="#fff" stroke-width="3.4" stroke-linejoin="round" stroke-linecap="round" />
<path d="M 64.24,271.21 C 79.39,271.73 88.27,279.57 88.79,293.67" fill="none" stroke="#f0101c" stroke-width="1.3" stroke-linejoin="round" stroke-linecap="round" />
<polyline points="64.24,263.9 64.24,293.67 88.79,293.67" fill="none" stroke="#fff" stroke-width="3.4" stroke-linejoin="round" stroke-linecap="round" />
<polyline points="64.24,263.9 64.24,293.67 88.79,293.67" fill="none" stroke="#f0101c" stroke-width="1.3" stroke-linejoin="round" stroke-linecap="round" />
<circle cx="64.24" cy="263.9" r="2.3" fill="#f0101c" stroke="none" stroke-width="0"/>
<circle cx="64.24" cy="271.21" r="2.3" fill="#f0101c" stroke="none" stroke-width="0"/>
<circle cx="64.24" cy="293.67" r="2.3" fill="#f0101c" stroke="none" stroke-width="0"/>
<circle cx="88.79" cy="293.67" r="2.3" fill="#f0101c" stroke="none" stroke-width="0"/>
<circle cx="27.01" cy="328.66" r="16.6" fill="#a9a596" stroke="#1a1a1a" stroke-width="1.4"/>
<polyline points="26.87,328.66 38.51,317.16" fill="none" stroke="#f0101c" stroke-width="2.4" stroke-linejoin="round" stroke-linecap="round" />
<polyline points="26.87,328.66 38.51,317.16" fill="none" stroke="#fff" stroke-width="0.792" stroke-linejoin="round" stroke-linecap="round" />
<circle cx="38.51" cy="317.16" r="2.2" fill="#f0101c" stroke="none" stroke-width="0"/>
<circle cx="26.87" cy="328.66" r="3.5999999999999996" fill="#fff" stroke="none" stroke-width="0"/>
<circle cx="26.87" cy="328.66" r="2.3" fill="#f0101c" stroke="none" stroke-width="0"/>
<polygon points="69.85,314.48 89.25,320.15 91.04,333.58 74.63,344.03 61.94,330.6" fill="#a9a596" stroke="#1a1a1a" stroke-width="1.4" stroke-linejoin="round" />
<circle cx="76.87" cy="328.66" r="16.6" fill="none" stroke="#f0101c" stroke-width="1.3"/>
<polyline points="76.87,328.66 88.81,317.91" fill="none" stroke="#f0101c" stroke-width="2.4" stroke-linejoin="round" stroke-linecap="round" />
<polyline points="76.87,328.66 88.81,317.91" fill="none" stroke="#fff" stroke-width="0.792" stroke-linejoin="round" stroke-linecap="round" />
<circle cx="88.81" cy="317.91" r="2.2" fill="#f0101c" stroke="none" stroke-width="0"/>
<circle cx="76.87" cy="328.66" r="3.5999999999999996" fill="#fff" stroke="none" stroke-width="0"/>
<circle cx="76.87" cy="328.66" r="2.3" fill="#f0101c" stroke="none" stroke-width="0"/>
<path d="M 42.54,364.48 C 41.79,380.6 29.85,391.79 13.13,393.28" fill="none" stroke="#000" stroke-width="1.6" stroke-linejoin="round" stroke-linecap="round" />
<polyline points="13.13,364.48 42.54,364.48 13.13,393.28" fill="none" stroke="#f0101c" stroke-width="2.0" stroke-linejoin="round" stroke-linecap="round" />
<polyline points="13.13,364.48 42.54,364.48 13.13,393.28" fill="none" stroke="#fff" stroke-width="0.66" stroke-linejoin="round" stroke-linecap="round" />
<circle cx="13.13" cy="364.48" r="2.4" fill="#f0101c" stroke="none" stroke-width="0"/>
<circle cx="42.54" cy="364.48" r="2.4" fill="#f0101c" stroke="none" stroke-width="0"/>
<circle cx="13.13" cy="393.28" r="2.4" fill="#f0101c" stroke="none" stroke-width="0"/>
<path d="M 68.66,393.28 C 58.21,383.58 59.7,365.67 74.63,362.39 C 82.09,360.9 88.06,363.43 92.24,368.66" fill="none" stroke="#000" stroke-width="1.6" stroke-linejoin="round" stroke-linecap="round" />
<polyline points="68.66,393.28 92.24,368.66" fill="none" stroke="#f0101c" stroke-width="2.0" stroke-linejoin="round" stroke-linecap="round" />
<polyline points="68.66,393.28 92.24,368.66" fill="none" stroke="#fff" stroke-width="0.66" stroke-linejoin="round" stroke-linecap="round" />
<polyline points="67.16,367.91 80.6,380.9" fill="none" stroke="#f0101c" stroke-width="2.0" stroke-linejoin="round" stroke-linecap="round" />
<polyline points="67.16,367.91 80.6,380.9" fill="none" stroke="#fff" stroke-width="0.66" stroke-linejoin="round" stroke-linecap="round" />
<circle cx="67.16" cy="367.91" r="2.4" fill="#f0101c" stroke="none" stroke-width="0"/>
<circle cx="92.24" cy="368.66" r="2.4" fill="#f0101c" stroke="none" stroke-width="0"/>
<circle cx="68.66" cy="393.28" r="2.4" fill="#f0101c" stroke="none" stroke-width="0"/>
<path d="M 23.13,415.22 C 37.31,409.7 49.25,423.88 44.78,435.07 C 40.3,447.76 20.9,449.25 14.18,434.33" fill="none" stroke="#000" stroke-width="1.6" stroke-linejoin="round" stroke-linecap="round" />
<polyline points="23.13,415.22 40,441.49" fill="none" stroke="#f0101c" stroke-width="2.0" stroke-linejoin="round" stroke-linecap="round" />
<polyline points="23.13,415.22 40,441.49" fill="none" stroke="#fff" stroke-width="0.66" stroke-linejoin="round" stroke-linecap="round" />
<polyline points="14.18,434.33 40,441.49" fill="none" stroke="#f0101c" stroke-width="2.0" stroke-linejoin="round" stroke-linecap="round" />
<polyline points="14.18,434.33 40,441.49" fill="none" stroke="#fff" stroke-width="0.66" stroke-linejoin="round" stroke-linecap="round" />
<circle cx="23.13" cy="415.22" r="2.4" fill="#f0101c" stroke="none" stroke-width="0"/>
<circle cx="14.18" cy="434.33" r="2.4" fill="#f0101c" stroke="none" stroke-width="0"/>
<circle cx="40.0" cy="441.49" r="2.4" fill="#f0101c" stroke="none" stroke-width="0"/>
<path d="M 62.99,416.42 L 90.3,416.42 C 89.55,431.34 77.61,441.79 62.99,442.09 Z" fill="#a9a596" stroke="#1a1a1a" stroke-width="1.5" stroke-linejoin="round" stroke-linecap="round" />
<polyline points="62.99,416.42 90.3,416.42" fill="none" stroke="#f0101c" stroke-width="2.0" stroke-linejoin="round" stroke-linecap="round" />
<polyline points="62.99,416.42 90.3,416.42" fill="none" stroke="#fff" stroke-width="0.66" stroke-linejoin="round" stroke-linecap="round" />
<polyline points="90.3,416.42 62.99,442.09" fill="none" stroke="#f0101c" stroke-width="2.4" stroke-linejoin="round" stroke-linecap="round" />
<polyline points="90.3,416.42 62.99,442.09" fill="none" stroke="#fff" stroke-width="0.792" stroke-linejoin="round" stroke-linecap="round" />
<circle cx="62.99" cy="416.42" r="2.2" fill="#f0101c" stroke="none" stroke-width="0"/>
<circle cx="90.3" cy="416.42" r="2.2" fill="#f0101c" stroke="none" stroke-width="0"/>
<circle cx="62.99" cy="442.09" r="2.2" fill="#f0101c" stroke="none" stroke-width="0"/>
<polygon points="31.04,489.28 36.27,489.28 36.27,493.31 44.03,487.04 36.27,480.78 36.27,484.81 31.04,484.81" fill="#f0101c" stroke="#8a0008" stroke-width="0.8" stroke-linejoin="round" />
<polygon points="24.63,491.22 24.63,496.45 20.6,496.45 26.87,504.21 33.13,496.45 29.1,496.45 29.1,491.22" fill="#f0101c" stroke="#8a0008" stroke-width="0.8" stroke-linejoin="round" />
<polygon points="22.69,484.81 17.46,484.81 17.46,480.78 9.7,487.04 17.46,493.31 17.46,489.28 22.69,489.28" fill="#f0101c" stroke="#8a0008" stroke-width="0.8" stroke-linejoin="round" />
<polygon points="29.1,482.87 29.1,477.64 33.13,477.64 26.87,469.88 20.6,477.64 24.63,477.64 24.63,482.87" fill="#f0101c" stroke="#8a0008" stroke-width="0.8" stroke-linejoin="round" />
<polygon points="22.39,482.57 31.34,482.57 31.34,491.52 22.39,491.52" fill="#fff" stroke="none" stroke-width="0" stroke-linejoin="round" />
<polygon points="22.39,482.57 26.87,482.57 26.87,487.04 22.39,487.04" fill="#ddd" stroke="none" stroke-width="0" stroke-linejoin="round" />
<polygon points="26.87,487.04 31.34,487.04 31.34,491.52 26.87,491.52" fill="#ddd" stroke="none" stroke-width="0" stroke-linejoin="round" />
<polygon points="59.7,487.64 77.61,481.37 94.78,487.64 74.63,497.04" fill="#a9a596" stroke="#1a1a1a" stroke-width="1.4" stroke-linejoin="round" />
<polygon points="59.7,487.64 74.63,497.04 74.63,503.46 59.7,491.22" fill="#6f6c60" stroke="#1a1a1a" stroke-width="1.4" stroke-linejoin="round" />
<polygon points="74.63,497.04 94.78,487.64 94.78,491.22 74.63,503.46" fill="#8a877a" stroke="#1a1a1a" stroke-width="1.4" stroke-linejoin="round" />
<polygon points="79.55,490.03 79.55,479.58 82.99,479.58 76.57,470.93 70.15,479.58 73.58,479.58 73.58,490.03" fill="#f0101c" stroke="#8a0008" stroke-width="0.8" stroke-linejoin="round" />
<path d="M 13.99,532.38 C 14.55,526.23 20.71,522.03 26.86,522.03 C 31.34,522.03 34.7,523.71 36.65,525.95 L 38.89,523.15 L 43.65,536.3 L 30.5,531.82 L 33.02,529.31 C 31.34,528.02 29.1,527.91 26.86,528.19 C 23.5,528.47 20.15,530.71 18.47,533.5 C 16.79,535.29 13.99,534.62 13.99,532.38 Z" fill="#f20814" stroke="#7a0008" stroke-width="0.8" stroke-linejoin="round" stroke-linecap="round" />
<path d="M 40.01,541.11 C 39.45,547.27 33.3,551.47 27.14,551.47 C 22.66,551.47 19.31,549.79 17.35,547.55 L 15.11,550.35 L 10.35,537.2 L 23.5,541.67 L 20.98,544.19 C 22.66,545.48 24.9,545.59 27.14,545.31 C 30.5,545.03 33.86,542.79 35.53,539.99 C 37.21,538.2 40.01,538.88 40.01,541.11 Z" fill="#f20814" stroke="#7a0008" stroke-width="0.8" stroke-linejoin="round" stroke-linecap="round" />
<polyline points="92.15,535.1 91.41,532.29 90.06,529.68 88.16,527.39 85.81,525.51 83.08,524.12 80.12,523.3 77.03,523.06 73.96,523.43 71.04,524.38 68.39,525.88 66.13,527.85 64.34,530.23 63.12,532.89 62.51,535.74 62.54,538.64 63.21,541.47 64.49,544.11 66.32,546.45 68.62,548.39 71.3,549.84" fill="none" stroke="#111" stroke-width="7.4" stroke-linejoin="round"  stroke-linecap="butt"/>
<polyline points="92.15,535.1 91.41,532.29 90.06,529.68 88.16,527.39 85.81,525.51 83.08,524.12 80.12,523.3 77.03,523.06 73.96,523.43 71.04,524.38 68.39,525.88 66.13,527.85 64.34,530.23 63.12,532.89 62.51,535.74 62.54,538.64 63.21,541.47 64.49,544.11 66.32,546.45 68.62,548.39 71.3,549.84" fill="none" stroke="#8a877a" stroke-width="5.2" stroke-linejoin="round"  stroke-linecap="butt"/>
<polyline points="76.09,523.11 74.69,523.29 73.31,523.6 71.97,524.03 70.68,524.58 69.45,525.25 68.3,526.03 67.23,526.9 66.25,527.87 65.37,528.93 64.61,530.06 63.96,531.25 63.44,532.5 63.04,533.79 62.78,535.1 62.65,536.44 62.65,537.78 62.8,539.12 63.07,540.44 63.48,541.72 64.02,542.97" fill="none" stroke="#55534a" stroke-width="5.2" stroke-linejoin="round"  stroke-linecap="butt"/>
<polyline points="65.06,543.58 69.26,540.32" fill="none" stroke="#111" stroke-width="1.1" stroke-linejoin="round" stroke-linecap="round" />
<polyline points="87.91,525.39 89.31,530.06" fill="none" stroke="#111" stroke-width="1.1" stroke-linejoin="round" stroke-linecap="round" />
<polyline points="83.86,530.26 82.62,529.46 81.23,528.88 79.76,528.55 78.24,528.48 76.74,528.67 75.3,529.11 73.97,529.79 72.8,530.69 71.83,531.78 71.09,533.01 70.6,534.35 70.39,535.75 70.45,537.16 70.8,538.53 71.41,539.83 72.26,541 73.33,542 74.58,542.8 75.97,543.37 77.44,543.69" fill="none" stroke="#500008" stroke-width="6.6" stroke-linejoin="round"  stroke-linecap="butt"/>
<polyline points="83.86,530.26 82.62,529.46 81.23,528.88 79.76,528.55 78.24,528.48 76.74,528.67 75.3,529.11 73.97,529.79 72.8,530.69 71.83,531.78 71.09,533.01 70.6,534.35 70.39,535.75 70.45,537.16 70.8,538.53 71.41,539.83 72.26,541 73.33,542 74.58,542.8 75.97,543.37 77.44,543.69" fill="none" stroke="#d0202a" stroke-width="5.0" stroke-linejoin="round"  stroke-linecap="butt"/>
<polygon points="78.59,540.32 82.78,537.99 82.04,540.04 86.7,542.65 81.66,544.7 82.04,546.57 78.12,544.7" fill="#d0202a" stroke="#500008" stroke-width="0.9" stroke-linejoin="round" />
<polygon points="10.45,569.73 45.52,569.73 45.52,604.21 10.45,604.21" fill="#fff" stroke="#f0101c" stroke-width="1.2" stroke-linejoin="round" />
<polygon points="10.45,578.39 36.57,578.39 36.57,604.21 10.45,604.21" fill="#a9a596" stroke="#1a1a1a" stroke-width="1.6" stroke-linejoin="round" />
<polygon points="32.38,588.09 41.88,578.59 44.63,581.33 46.74,568.67 34.07,570.78 36.82,573.52 27.32,583.02" fill="#f0101c" stroke="#fff" stroke-width="1.2" stroke-linejoin="round" />
<polygon points="32.17,587.87 41.67,578.38 44.42,581.12 46.53,568.88 34.28,570.99 37.03,573.73 27.53,583.23" fill="#f0101c" stroke="#8a0008" stroke-width="0.6" stroke-linejoin="round" />
<path d="M 59.7,575.4 C 70.15,566.45 86.57,569.43 91.79,582.87 C 95.52,591.82 92.54,599.28 88.06,603.76" fill="none" stroke="#f0101c" stroke-width="2" stroke-linejoin="round" stroke-linecap="round" />
<path d="M 64.18,588.84 C 64.18,582.87 68.66,579.13 74.63,579.13" fill="none" stroke="#1a1a1a" stroke-width="1.8" stroke-linejoin="round" stroke-linecap="round" />
<path d="M 85.07,587.34 C 85.82,593.31 82.84,597.79 77.61,599.28" fill="none" stroke="#1a1a1a" stroke-width="1.8" stroke-linejoin="round" stroke-linecap="round" />
<polygon points="79.38,590.43 86.91,582.35 89.64,584.9 91.12,572.81 79.16,575.13 81.89,577.67 74.36,585.75" fill="#f0101c" stroke="#8a0008" stroke-width="0.8" stroke-linejoin="round" />
<polygon points="15.67,654.06 25.34,648.63 27.59,651.35 18.03,656.99" fill="#e6f01c" stroke="#0a0a0a" stroke-width="1.4" stroke-linejoin="round" />
<polygon points="12.28,654.74 15.67,653.86 17.87,658.66 16.3,661.59 13.32,658.4" fill="#0a0a0a" stroke="#0a0a0a" stroke-width="0.8" stroke-linejoin="round" />
<path d="M 22.99,640.9 C 22.99,633.06 29.26,628.36 36.57,628.1 C 41.27,628.1 43.36,630.45 42.58,634.11 L 41.27,643.51 L 29.26,652.5 C 26.12,651.35 23.51,647.17 22.99,640.9 Z" fill="#0c0c0c" stroke="#000" stroke-width="1.0" stroke-linejoin="round" stroke-linecap="round" />
<path d="M 27.69,645.08 C 27.69,637.24 32.39,632.02 39.71,630.97 C 41.27,632.02 41.8,634.63 41.27,642.99 L 29.52,651.35 C 28.21,649.78 27.69,647.17 27.69,645.08 Z" fill="#a8a8b0" stroke="#d6d6de" stroke-width="0.9" stroke-linejoin="round" stroke-linecap="round" />
<ellipse cx="35.27" cy="640.11" rx="3.5" ry="6.3" transform="rotate(22 35.27 640.11)" fill="#f2f210"/>
<path d="M 24.45,640.64 C 24.66,639.85 25.34,639.75 25.71,640.38 L 25.91,644.56 C 25.5,645.34 24.82,645.18 24.56,644.45 Z" fill="#c6d61e" stroke="none" stroke-width="0" stroke-linejoin="round" stroke-linecap="round" />
<polyline points="65.67,649.07 80.6,634.15" fill="none" stroke="#000" stroke-width="1.3" stroke-linejoin="round" stroke-linecap="round" />
<polyline points="75.37,628.93 89.55,643.1" fill="none" stroke="#000" stroke-width="1.3" stroke-linejoin="round" stroke-linecap="round" />
<polyline points="60.9,643.55 75.37,657.58" fill="none" stroke="#000" stroke-width="1.3" stroke-linejoin="round" stroke-linecap="round" />
<polyline points="63.43,645.34 67.91,652.81" fill="none" stroke="#000" stroke-width="2.2" stroke-linejoin="round" stroke-linecap="round" />
<polyline points="67.91,646.09 63.43,652.06" fill="none" stroke="#000" stroke-width="1.2" stroke-linejoin="round" stroke-linecap="round" />
<polyline points="78.06,630.72 82.84,637.88" fill="none" stroke="#000" stroke-width="2.2" stroke-linejoin="round" stroke-linecap="round" />
<polyline points="82.84,630.72 78.06,637.88" fill="none" stroke="#000" stroke-width="1.2" stroke-linejoin="round" stroke-linecap="round" />
<circle cx="91.04" cy="644.9" r="2.1" fill="#5cb85c" stroke="none" stroke-width="0"/>
<circle cx="76.87" cy="659.22" r="2.1" fill="#5cb85c" stroke="none" stroke-width="0"/>
<text x="67.91" y="636.39" font-family="Liberation Sans, sans-serif" font-size="11" fill="#000" text-anchor="middle" transform="rotate(-42 67.91 636.39) translate(0 3.5)">3</text>
<path d="M 19.4,709.52 C 10.45,702.06 8.96,690.12 17.91,684.15 C 25.37,679.67 35.82,679.67 42.99,681.91 Z" fill="#f4e020" stroke="#000" stroke-width="1.5" stroke-linejoin="round" stroke-linecap="round" />
<path d="M 22.39,702.06 C 17.16,697.58 17.16,691.61 22.39,687.88 C 26.87,685.34 32.09,685.34 35.82,686.39 Z" fill="#efefef" stroke="#000" stroke-width="1.1" stroke-linejoin="round" stroke-linecap="round" />
<path d="M 17.91,705.34 C 11.64,699.82 11.64,690.87 19.1,686.39 C 25.37,682.96 35.07,682.96 40.3,684.15" fill="none" stroke="#6a6000" stroke-width="1" stroke-linejoin="round" stroke-linecap="round" stroke-dasharray="1.2 1.6"/>
<polyline points="20.9,706.84 41.04,683.85" fill="none" stroke="#6a6000" stroke-width="1" stroke-linejoin="round" stroke-linecap="round" stroke-dasharray="1.2 1.6"/>
<polygon points="70.45,678.48 94.48,678.48 94.48,699.82 70.45,699.82" fill="#fff" stroke="#000" stroke-width="1.4" stroke-linejoin="round" />
<polyline points="70.45,689.67 66.42,689.67 66.42,705.04" fill="none" stroke="#000" stroke-width="1.3" stroke-linejoin="round" stroke-linecap="round" />
<polygon points="63.13,703.55 69.85,703.55 66.42,710.72" fill="#000" stroke="#000" stroke-width="0.6" stroke-linejoin="round" />
<text x="82.54" y="692.81" font-family="Liberation Serif, serif" font-size="12.5" fill="#000" text-anchor="middle">A1</text>
<polyline points="23.88,746.84 14.18,740.12" fill="none" stroke="#d82020" stroke-width="1.4" stroke-linejoin="round" stroke-linecap="round" stroke-dasharray="1.3 2"/>
<polyline points="23.88,746.84 14.18,752.81" fill="none" stroke="#30a040" stroke-width="1.4" stroke-linejoin="round" stroke-linecap="round" stroke-dasharray="1.3 2"/>
<polyline points="23.88,746.84 23.88,759.52" fill="none" stroke="#2060c0" stroke-width="1.6" stroke-linejoin="round" stroke-linecap="round" stroke-dasharray="1.3 2"/>
<polygon points="25.22,746.84 25.22,737.43 27.61,737.43 23.88,729.22 20.15,737.43 22.54,737.43 22.54,746.84" fill="#1c50b0" stroke="#0c2860" stroke-width="0.6" stroke-linejoin="round" />
<polygon points="24.43,747.72 33.55,742.03 34.81,744.05 39.32,737.19 31.17,738.23 32.44,740.26 23.33,745.95" fill="#2a9a3a" stroke="#145a20" stroke-width="0.6" stroke-linejoin="round" />
<polygon points="23.31,747.71 32.32,753.56 31.02,755.57 39.15,756.75 34.76,749.81 33.46,751.81 24.45,745.96" fill="#d81820" stroke="#700008" stroke-width="0.6" stroke-linejoin="round" />
<circle cx="23.88" cy="746.84" r="2.6" fill="#000" stroke="none" stroke-width="0"/>
<path d="M 61.19,750.57 L 70.15,728.93 L 78.36,726.69 L 91.04,757.28 L 87.31,762.51 L 80.6,761.01 L 77.61,754.3 L 70.15,752.81 L 67.91,755.79 Z" fill="#8a877a" stroke="#1a1a16" stroke-width="1.5" stroke-linejoin="round" stroke-linecap="round" />
<path d="M 70.15,728.93 L 73.13,727.73 L 87.31,758.48 L 87.31,762.51 L 80.6,761.01 L 82.84,758.78 L 79.85,751.31 L 70.15,749.07 L 67.91,755.79 L 61.19,750.57 L 64.18,749.07 Z" fill="#a9a596" stroke="#1a1a16" stroke-width="1.2" stroke-linejoin="round" stroke-linecap="round" />
<path d="M 72.69,734.9 L 77.61,746.84 L 70.15,745.34 Z" fill="#5b584e" stroke="#1a1a16" stroke-width="1.2" stroke-linejoin="round" stroke-linecap="round" />
<path d="M 67.91,749.07 C 70.15,746.84 74.63,746.84 76.12,749.82 C 75.37,752.81 70.15,752.81 67.91,749.07 Z" fill="#c9c6b8" stroke="#1a1a16" stroke-width="1" stroke-linejoin="round" stroke-linecap="round" />
<rect x="2.5" y="778.5" width="49" height="48" fill="#c4def5" stroke="#98c8ee" stroke-width="1"/>
<path d="M 12.54,799.56 C 13.06,795.9 17.76,793.81 22.73,793.29 L 20.48,796.94 L 22.57,800.71 C 19.85,800.86 17.24,801.65 16.46,802.69 C 14.63,802.17 13.06,801.12 12.54,799.56 Z" fill="#d4544a" stroke="#50080c" stroke-width="1.1" stroke-linejoin="round" stroke-linecap="round" />
<path d="M 23.51,797.2 L 31.5,789.37 L 31.5,793.18 C 36.57,793.29 41.8,795.9 43.47,799.56 L 43.47,802.17 C 41.27,801.12 36.57,799.56 31.5,799.45 L 31.5,804.26 Z" fill="#7ed495" stroke="#0a4420" stroke-width="1.1" stroke-linejoin="round" stroke-linecap="round" />
<polyline points="27.95,786.23 27.95,821.5" fill="none" stroke="#0a0a0a" stroke-width="2.0" stroke-linejoin="round"  stroke-linecap="butt"/>
<path d="M 43.47,799.56 L 43.47,807.39 C 41.8,811.05 37.62,813.14 33.44,813.77 L 36.57,809.22 L 33.44,806.35 C 36.57,805.83 41.27,804.26 43.47,802.17 Z" fill="#2a9e4c" stroke="#0a4420" stroke-width="1.1" stroke-linejoin="round" stroke-linecap="round" />
<path d="M 12.54,799.56 L 12.54,807.92 C 13.58,811.57 19.85,814.18 24.56,814.71 L 24.56,817.74 L 32.81,809.9 L 26.02,804.26 L 25.71,806.97 C 21.94,806.61 17.76,805.04 16.46,802.69 C 14.63,802.17 13.06,801.12 12.54,799.56 Z" fill="#d6122e" stroke="#50080c" stroke-width="1.1" stroke-linejoin="round" stroke-linecap="round" />
<defs><linearGradient id="ghand" x1="0.1" y1="0.95" x2="0.45" y2="0.55"><stop offset="0" stop-color="#f2dfae" stop-opacity="0.55"/><stop offset="1" stop-color="#f2dfae" stop-opacity="1"/></linearGradient></defs>
<path d="M 61.14,810.79 C 64.54,807.39 66.11,800.08 68.72,795.9 C 70.29,792.76 72.9,789.63 75.77,788.69 C 78.12,788.06 81.26,786.91 83.35,787.43 C 84.92,786.76 87.01,786.23 88.31,786.91 C 90.14,788.06 91.71,788.85 92.65,790.15 C 93.01,791.2 92.23,792.24 91.18,793.03 C 88.05,795.38 84.39,797.99 82.83,801.12 C 81.78,803.21 81.26,804.78 82.56,805.83 C 84.39,806.87 88.57,806.61 90.92,807.65 C 92.23,808.44 91.97,810.01 90.66,810.53 C 88.57,811.05 85.96,811.05 83.35,811.83 C 81.26,812.88 79.17,814.18 77.08,814.71 C 74.47,814.97 71.85,816.27 70.29,818.63 L 65.06,819.41 L 59.31,814.18 Z" fill="url(#ghand)" stroke="none" stroke-width="0" stroke-linejoin="round" stroke-linecap="round" />
<path d="M 61.14,810.79 C 64.54,807.39 66.11,800.08 68.72,795.9 C 70.29,792.76 72.9,789.63 75.77,788.69 C 76.56,788.48 77.08,789 76.56,789.73 L 72.9,794.33 M 76.56,789.73 C 78.12,788.06 81.26,786.91 83.35,787.43 C 84.13,787.8 83.87,788.69 83.35,789.11 L 76.56,794.59 M 83.35,789.11 C 84.92,787.54 87.01,786.23 88.31,786.91 C 89.2,787.54 88.83,788.85 88.05,789.63 L 80.47,796.42 M 88.05,789.63 C 89.62,788.85 91.71,788.85 92.65,790.15 C 93.01,791.2 92.23,792.24 91.18,793.03 C 88.05,795.38 84.39,797.99 82.83,801.12 C 81.78,803.21 81.26,804.78 82.56,805.83 C 84.39,806.87 88.57,806.61 90.92,807.65 C 92.23,808.44 91.97,810.01 90.66,810.53 C 88.57,811.05 85.96,811.05 83.35,811.83 C 81.26,812.88 79.17,814.18 77.08,814.71 C 74.47,814.97 71.85,816.27 70.29,818.63" fill="none" stroke="#2a2418" stroke-width="1.3" stroke-linejoin="round" stroke-linecap="round" />
<polyline points="24.51,854.96 13.43,866.48" fill="none" stroke="#1c1c1c" stroke-width="4.6" stroke-linejoin="round" stroke-linecap="round" />
<circle cx="32.54" cy="846.63" r="9.0" fill="#a9c3de" stroke="#26303c" stroke-width="2.2"/>
<circle cx="30.75" cy="844.54" r="3.2" fill="#c8dcf0" stroke="none" stroke-width="0"/>
<polygon points="62.69,838.42 93.73,838.42 93.73,869.46 62.69,869.46" fill="none" stroke="#e8101c" stroke-width="1.8" stroke-linejoin="round" />
<polyline points="74.25,854.96 63.43,866.48" fill="none" stroke="#1c1c1c" stroke-width="4.6" stroke-linejoin="round" stroke-linecap="round" />
<circle cx="82.09" cy="846.63" r="9.0" fill="#a9c3de" stroke="#26303c" stroke-width="2.2"/>
<circle cx="80.3" cy="844.54" r="3.2" fill="#c8dcf0" stroke="none" stroke-width="0"/>
<polygon points="23.76,896 18.27,890.51 20.17,888.61 11.83,886.82 13.63,895.16 15.53,893.26 21.02,898.75" fill="#f0101c" stroke="#8a0008" stroke-width="0.8" stroke-linejoin="round" />
<polygon points="36.45,896.51 41.41,891.55 43.31,893.45 45.1,885.11 36.76,886.9 38.66,888.8 33.7,893.76" fill="#f0101c" stroke="#8a0008" stroke-width="0.8" stroke-linejoin="round" />
<polygon points="34.15,910.69 39.11,915.65 37.21,917.55 45.55,919.34 43.75,911 41.85,912.9 36.89,907.94" fill="#f0101c" stroke="#8a0008" stroke-width="0.8" stroke-linejoin="round" />
<polyline points="21.66,908.43 13.43,916.48" fill="none" stroke="#1c1c1c" stroke-width="4.6" stroke-linejoin="round" stroke-linecap="round" />
<circle cx="27.61" cy="902.6" r="8.0" fill="#a9c3de" stroke="#26303c" stroke-width="2.2"/>
<circle cx="25.82" cy="900.51" r="3.2" fill="#c8dcf0" stroke="none" stroke-width="0"/>
<circle cx="67.91" cy="897.37" r="8.2" fill="#a9c3de" stroke="#26303c" stroke-width="2.2"/>
<path d="M 65.67,895.88 L 74.63,887.67 L 74.63,892.6 C 83.58,891.4 89.55,897.37 88.06,907.07 C 85.82,901.85 81.34,899.61 74.63,900.66 L 74.63,905.58 Z" fill="#2a8ee8" stroke="#0c2c60" stroke-width="1.1" stroke-linejoin="round" stroke-linecap="round" />
<path d="M 82.84,909.31 C 85.07,911.55 83.58,915.28 77.61,916.48 C 81.34,913.04 79.85,910.81 77.61,908.57 Z" fill="#2a8ee8" stroke="#0c2c60" stroke-width="1" stroke-linejoin="round" stroke-linecap="round" />
<polyline points="78.36,904.09 91.79,917.07" fill="none" stroke="#1c1c1c" stroke-width="4.4" stroke-linejoin="round" stroke-linecap="round" />
<path d="M 27.54,948.15 C 24.85,949.49 22.83,952.18 22.57,956.88 L 21.49,960.91 L 23.1,960.91 L 23.91,968.3 L 26.19,968.97 L 27.27,964.94 L 28.48,968.97 L 30.89,968.3 L 31.56,960.91 L 33.04,960.91 L 32.24,956.88 C 31.97,952.18 30.22,949.49 27.54,948.15 Z" fill="#fff" stroke="#000" stroke-width="1.3" stroke-linejoin="round" stroke-linecap="round" />
<circle cx="27.54" cy="946.13" r="1.9" fill="#fff" stroke="#000" stroke-width="1.2"/>
<polyline points="19.48,976.62 32.24,969.64" fill="none" stroke="#e8101c" stroke-width="1.5" stroke-linejoin="round" stroke-linecap="round" />
<polyline points="22.16,969.91 33.58,976.35" fill="none" stroke="#e8101c" stroke-width="1.5" stroke-linejoin="round" stroke-linecap="round" />
<path d="M 61.11,962.92 C 64.47,954.86 75.22,951.51 83.28,954.19 C 88.65,956.21 92.01,959.56 94.02,960.24 C 87.31,960.24 85.96,966.95 76.56,967.62 C 69.85,968.03 64.47,966.28 61.11,962.92 Z" fill="#e8e8e8" stroke="none" stroke-width="0" stroke-linejoin="round" stroke-linecap="round" />
<path d="M 61.11,959.56 C 65.82,952.18 75.22,949.49 81.93,950.16 C 87.31,950.83 91.34,953.52 93.35,956.88" fill="none" stroke="#000" stroke-width="3" stroke-linejoin="round" stroke-linecap="round" />
<path d="M 61.11,963.19 C 65.82,956.88 73.88,954.19 80.59,955.54 C 85.96,956.88 89.99,959.56 94.02,960.24" fill="none" stroke="#111" stroke-width="2" stroke-linejoin="round" stroke-linecap="round" />
<path d="M 61.79,964 C 67.16,968.3 77.9,968.97 85.96,963.59" fill="none" stroke="#444" stroke-width="1.1" stroke-linejoin="round" stroke-linecap="round" />
<circle cx="74.14" cy="960.91" r="5.3" fill="#0a0a0a" stroke="none" stroke-width="0"/>
<circle cx="72.67" cy="959.16" r="1.5" fill="#fff" stroke="none" stroke-width="0"/>
<path d="M 63.13,966.28 C 69.85,970.98 80.59,970.98 88.65,965.61 M 67.16,968.97 C 72.53,973 80.59,973 87.31,968.3 M 75.22,972.33 L 76.56,977.7 M 80.59,970.98 L 83.28,975.01 M 85.96,968.3 L 89.99,972.33" fill="none" stroke="#bdbdbd" stroke-width="1" stroke-linejoin="round" stroke-linecap="round" />
<path d="M 80.59,952.85 C 85.96,952.85 91.34,955.54 94.69,958.89" fill="none" stroke="#999" stroke-width="2.4" stroke-linejoin="round" stroke-linecap="round" />
<ellipse cx="17.73" cy="1005.9" rx="5.6" ry="8.2" transform="rotate(-6 17.73 1005.9)" fill="#8d8d8d"/>
<ellipse cx="18.13" cy="1020.95" rx="3.9" ry="4.6" fill="#8d8d8d"/>
<rect x="13.43" y="1012.89" width="8.6" height="5" fill="#8d8d8d" transform="rotate(-4 17.73 1015.31)"/>
<polyline points="13.43,1013.96 22.16,1013.16" fill="none" stroke="#e0e0e0" stroke-width="0.9" stroke-linejoin="round" stroke-linecap="round" />
<polyline points="13.7,1017.99 22.43,1017.19" fill="none" stroke="#e0e0e0" stroke-width="0.9" stroke-linejoin="round" stroke-linecap="round" />
<ellipse cx="36" cy="1003.89" rx="5.6" ry="8.4" transform="rotate(18 36 1003.89)" fill="#8d8d8d"/>
<ellipse cx="30.22" cy="1017.72" rx="3.8" ry="4.8" transform="rotate(18 30.22 1017.72)" fill="#8d8d8d"/>
<rect x="27.94" y="1009.93" width="8.6" height="5" fill="#8d8d8d" transform="rotate(18 32.24 1012.62)"/>
<polyline points="29.28,1010.2 37.34,1012.89" fill="none" stroke="#e0e0e0" stroke-width="0.9" stroke-linejoin="round" stroke-linecap="round" />
<polyline points="27.94,1013.96 36,1016.65" fill="none" stroke="#e0e0e0" stroke-width="0.9" stroke-linejoin="round" stroke-linecap="round" />
<polygon points="76.83,995.83 91.74,1010.61 76.83,1025.78" fill="#000" stroke="#000" stroke-width="0.5" stroke-linejoin="round" />
<circle cx="76.83" cy="1010.61" r="10.6" fill="#fafafa" stroke="#000" stroke-width="1.4"/>
<polyline points="62.06,1010.61 87.04,1010.61" fill="none" stroke="#333" stroke-width="1.3" stroke-linejoin="round" stroke-linecap="round" />
</svg>
<!--/LEFT-->
</div>
<div id="fr1"></div><div id="fr2"></div>
<div id="vp">
<svg width="1325" height="984" viewBox="106 88 1325 984" style="position:absolute;left:0;top:0">
<!--VIEWPORT-->
<line x1="428.5" y1="87" x2="428.5" y2="716.6" stroke="#12127c" stroke-width="1.3"/>
<line x1="428.5" y1="719.6" x2="428.5" y2="1072" stroke="#10104a" stroke-width="1.3" stroke-dasharray="1.2 2.8"/>
<line x1="428.4" y1="716.6" x2="1352" y2="88" stroke="#1f8a1f" stroke-width="1.1"/>
<line x1="428.4" y1="716.6" x2="886" y2="1072" stroke="#7c1414" stroke-width="1.1"/>
<line x1="425.4" y1="714.3000000000001" x2="107.3" y2="468.1" stroke="#7a1c1c" stroke-width="1.4" stroke-dasharray="1.2 3.85"/>
<line x1="425.4" y1="718.6" x2="107.3" y2="934.7" stroke="#226a22" stroke-width="1.4" stroke-dasharray="1.2 3.64"/>
<polygon points="611,386 645.7,340.2 650.5,343.6 655.2,342.5 655.2,328 684.3,291.6 697.8,281.2 710.6,292.4 782.4,395.4 782.4,853 747.6,874.7 700,880 611,800" fill="#c8ac55"/>
<polygon points="684.3,291.6 697.8,281.2 710.6,292.4" fill="#f0c860"/>
<polygon points="620.4,432 672.7,397 672.7,388.7 697.3,372.2 750.7,412.5 740,440 700,500 700,840 620.4,840" fill="#cc7acc"/>
<polygon points="697.3,372.2 672.7,388.7 733.7,434.7 750.7,412.5" fill="#f492f4"/>
<polygon points="620.9,431.6 671.6,398.8 677.6,403.3 626.9,437.6" fill="#f492f4"/>
<polygon points="638,419.5 638,415 643.5,411 646.5,414" fill="#f492f4"/>
<polygon points="691.3,471.2 722.3,450.6 706.5,471.2" fill="#f492f4"/>
<polygon points="751.7,411.2 685.9,497.1 685.9,845 755,845" fill="#c8ac55"/>
<path d="M730.2,845 V453 Q730.2,448 735.2,448 Q740.5,448 740.5,453 V845 Z" fill="url(#gtube)"/>
<defs><linearGradient id="gpatch" x1="0" y1="0" x2="1" y2="1"><stop offset="0" stop-color="#f6d878"/><stop offset="1" stop-color="#c8ac55"/></linearGradient><linearGradient id="gtube" x1="0" y1="0" x2="1" y2="0"><stop offset="0" stop-color="#f8d478"/><stop offset="1" stop-color="#ecc258"/></linearGradient></defs>
<polygon points="645.7,340.2 650.5,343.6 655.2,342.5 655.2,347 648,360 645.7,363" fill="url(#gpatch)"/>
<g stroke-linecap="square">
<line x1="611" y1="386" x2="611" y2="775" stroke="#000" stroke-width="1.7"/>
<line x1="782.4" y1="395.4" x2="782.4" y2="853" stroke="#000" stroke-width="1.7"/>
<line x1="782.4" y1="853" x2="747.6" y2="874.7" stroke="#000" stroke-width="1.7"/>
<polyline points="684.3,291.6 697.8,281.2 710.6,292.4" fill="none" stroke="#000" stroke-width="1.7"/>
<line x1="697.3" y1="292.5" x2="697.3" y2="372.2" stroke="#000" stroke-width="1.3"/>
<polyline points="672.7,388.7 697.3,372.2 750.7,412.5" fill="none" stroke="#000" stroke-width="1.7"/>
<line x1="672.7" y1="388.7" x2="672.7" y2="397.3" stroke="#000" stroke-width="1.5"/>
<line x1="672.7" y1="388.7" x2="733.7" y2="434.7" stroke="#000" stroke-width="1"/>
<line x1="672.7" y1="397.3" x2="729.5" y2="440.2" stroke="#000" stroke-width="1.7"/>
<line x1="620.9" y1="431.6" x2="671.6" y2="398.8" stroke="#000" stroke-width="1.7"/>
<line x1="626.9" y1="437.6" x2="677.6" y2="403.3" stroke="#000" stroke-width="1"/>
<line x1="620.4" y1="432" x2="620.4" y2="770" stroke="#000" stroke-width="1.7"/>
<line x1="626.7" y1="437.6" x2="626.7" y2="775" stroke="#000" stroke-width="1"/>
<line x1="619.2" y1="398" x2="619.2" y2="431" stroke="#000" stroke-width="1"/>
<line x1="697.3" y1="418" x2="697.3" y2="464.5" stroke="#000" stroke-width="1.3"/>
<line x1="691.3" y1="471.2" x2="723.5" y2="450" stroke="#000" stroke-width="1.6"/>
<line x1="678.9" y1="486" x2="678.9" y2="815" stroke="#000" stroke-width="1.7"/>
<line x1="685.9" y1="496" x2="685.9" y2="822" stroke="#000" stroke-width="1.7"/>
<line x1="694.6" y1="509" x2="694.6" y2="828" stroke="#000" stroke-width="1"/>
<line x1="730.0" y1="457" x2="730.0" y2="805" stroke="#000" stroke-width="1.7"/>
<line x1="740.8" y1="450" x2="740.8" y2="800" stroke="#000" stroke-width="1"/>
<line x1="765" y1="396" x2="765" y2="418" stroke="#000" stroke-width="1.6"/>
<line x1="716.4" y1="467" x2="716.4" y2="480" stroke="#000" stroke-width="1.6"/>
<line x1="704.5" y1="472" x2="704.5" y2="496" stroke="#000" stroke-width="1"/>
<line x1="707" y1="474" x2="707" y2="490" stroke="#000" stroke-width="1"/>
<line x1="713" y1="462" x2="713" y2="470" stroke="#000" stroke-width="1.7"/>
<line x1="645.5" y1="340" x2="645.5" y2="414.8" stroke="#000" stroke-width="1"/>
<line x1="642.5" y1="358" x2="642.5" y2="413" stroke="#000" stroke-width="1"/>
<line x1="656.6" y1="327.5" x2="656.6" y2="338" stroke="#000" stroke-width="1.7"/>
<line x1="658.2" y1="334" x2="658.2" y2="348.4" stroke="#000" stroke-width="1.7"/>
<line x1="633.9" y1="370.3" x2="633.9" y2="379" stroke="#000" stroke-width="1.7"/>
<line x1="637" y1="375.2" x2="637" y2="419" stroke="#000" stroke-width="1.6"/>
</g>
<polygon points="596.4,762 694.2,837 694.2,922.5 596.4,845.4" fill="#c83200" stroke="#000" stroke-width="1" stroke-linejoin="round"/>
<polygon points="694.2,837 746.6,804.4 746.6,887.4 694.2,922.5" fill="#c83200" stroke="#000" stroke-width="1" stroke-linejoin="round"/>
<path d="M606,755.5 Q608.5,753.5 609.5,756 L610.8,763.3 L694.2,828 L730.2,805.3 L731.5,799.5 Q733,796.5 737.5,798 L746.6,804.4 L694.2,837 L596.4,762 Z" fill="#f84010" stroke="#000" stroke-width="1" stroke-linejoin="round"/>
<g stroke-linecap="round">
<line x1="596.4" y1="762" x2="596.4" y2="845.4" stroke="#000" stroke-width="1.7"/>
<line x1="596.4" y1="845.4" x2="694.2" y2="922.5" stroke="#000" stroke-width="1.7"/>
<line x1="694.2" y1="922.5" x2="746.6" y2="887.4" stroke="#000" stroke-width="1.7"/>
<line x1="746.6" y1="887.4" x2="746.6" y2="804.4" stroke="#000" stroke-width="1.7"/>
<line x1="596.4" y1="762" x2="606" y2="755.5" stroke="#000" stroke-width="1.7"/>
</g>
<path d="M513.6,704.2 L512.3,702.2 L511.0,700.2 L509.9,698.1 L508.9,695.9 L508.1,693.8 L507.4,691.7 L506.9,689.7 L506.6,687.7 L506.4,685.8 L506.4,684.1 L506.6,682.5 L507.0,681.1 L507.6,679.9 L508.3,678.9 L509.2,678.1 L510.2,677.5 L511.4,677.2 L512.7,677.1 L514.1,677.2 L515.6,677.5 L517.2,678.1 L518.8,679.0 L520.4,680.0 L522.1,681.2 L523.7,682.6 L525.3,684.2 L526.9,685.9 L528.4,687.8" fill="none" stroke="#1a0800" stroke-width="9.600000000000001" stroke-linecap="butt"/>
<path d="M516.1,707.3 L514.4,705.3 L512.8,703.1 L511.4,700.8 L510.1,698.5 L509.0,696.1 L508.0,693.7 L507.3,691.4 L506.8,689.1 L506.5,686.9 L506.4,684.9 L506.5,683.1 L506.9,681.4 L507.5,680.0 L508.3,678.9 L509.3,678.0 L510.5,677.4 L511.9,677.1 L513.4,677.1 L515.0,677.4 L516.7,678.0 L518.5,678.8 L520.3,679.9 L522.2,681.3 L524.0,682.9 L525.8,684.7 L527.5,686.7 L529.2,688.8 L530.7,691.1" fill="none" stroke="#d03c08" stroke-width="7.4" stroke-linecap="butt"/>
<path d="M516.1,707.3 L514.4,705.3 L512.8,703.1 L511.4,700.8 L510.1,698.5 L509.0,696.1 L508.0,693.7 L507.3,691.4 L506.8,689.1 L506.5,686.9 L506.4,684.9 L506.5,683.1 L506.9,681.4 L507.5,680.0 L508.3,678.9 L509.3,678.0 L510.5,677.4 L511.9,677.1 L513.4,677.1 L515.0,677.4 L516.7,678.0 L518.5,678.8 L520.3,679.9 L522.2,681.3 L524.0,682.9 L525.8,684.7 L527.5,686.7 L529.2,688.8 L530.7,691.1" fill="none" stroke="#f4500e" stroke-width="4.2" stroke-linecap="butt"/>
<path d="M501.6,712.4 L500.6,710.1 L499.8,707.8 L499.0,705.5 L498.4,703.1 L497.9,700.7 L497.6,698.3 L497.5,696.0 L497.5,693.8 L497.7,691.7 L498.1,689.7 L498.7,687.9 L499.5,686.3 L500.4,684.8 L501.5,683.5 L502.7,682.5 L504.2,681.6 L505.7,681.0 L507.3,680.7 L508.9,680.7 L510.5,681.0 L512.2,681.5 L513.9,682.2 L515.7,683.2 L517.5,684.3 L519.3,685.6 L521.0,687.1 L522.7,688.8 L524.3,690.5" fill="none" stroke="#1a0800" stroke-width="9.600000000000001" stroke-linecap="butt"/>
<path d="M503.4,715.9 L502.2,713.6 L501.1,711.1 L500.0,708.6 L499.2,705.9 L498.4,703.3 L497.9,700.6 L497.6,698.0 L497.5,695.4 L497.6,693.0 L497.9,690.7 L498.5,688.6 L499.3,686.6 L500.3,685.0 L501.5,683.5 L502.9,682.4 L504.5,681.5 L506.3,680.9 L508.1,680.7 L509.8,680.9 L511.7,681.4 L513.7,682.1 L515.6,683.1 L517.6,684.4 L519.6,685.9 L521.6,687.6 L523.4,689.5 L525.2,691.5 L526.8,693.7" fill="none" stroke="#d03c08" stroke-width="7.4" stroke-linecap="butt"/>
<path d="M503.4,715.9 L502.2,713.6 L501.1,711.1 L500.0,708.6 L499.2,705.9 L498.4,703.3 L497.9,700.6 L497.6,698.0 L497.5,695.4 L497.6,693.0 L497.9,690.7 L498.5,688.6 L499.3,686.6 L500.3,685.0 L501.5,683.5 L502.9,682.4 L504.5,681.5 L506.3,680.9 L508.1,680.7 L509.8,680.9 L511.7,681.4 L513.7,682.1 L515.6,683.1 L517.6,684.4 L519.6,685.9 L521.6,687.6 L523.4,689.5 L525.2,691.5 L526.8,693.7" fill="none" stroke="#f4500e" stroke-width="4.2" stroke-linecap="butt"/>
<path d="M480.5,726.7 L479.5,724.5 L478.6,722.2 L477.8,719.9 L477.1,717.5 L476.6,715.2 L476.2,712.9 L476.1,710.6 L476.0,708.4 L476.2,706.3 L476.6,704.4 L477.1,702.6 L477.8,701.0 L478.7,699.5 L479.7,698.3 L481.0,697.3 L482.3,696.5 L483.8,695.9 L485.4,695.6 L487.2,695.5 L489.0,695.6 L491.0,695.9 L492.9,696.5 L494.9,697.3 L496.9,698.3 L498.9,699.5 L500.9,700.8 L502.8,702.3 L504.6,703.9" fill="none" stroke="#1a0800" stroke-width="9.600000000000001" stroke-linecap="butt"/>
<path d="M482.4,730.2 L481.1,727.9 L479.9,725.5 L478.8,723.0 L477.9,720.4 L477.1,717.7 L476.6,715.1 L476.2,712.5 L476.0,710.0 L476.1,707.6 L476.4,705.3 L476.9,703.2 L477.6,701.3 L478.6,699.7 L479.7,698.3 L481.1,697.2 L482.7,696.3 L484.4,695.8 L486.3,695.5 L488.3,695.5 L490.4,695.8 L492.6,696.4 L494.8,697.3 L497.1,698.4 L499.3,699.7 L501.5,701.3 L503.6,703.0 L505.6,704.8 L507.5,706.8" fill="none" stroke="#d03c08" stroke-width="7.4" stroke-linecap="butt"/>
<path d="M482.4,730.2 L481.1,727.9 L479.9,725.5 L478.8,723.0 L477.9,720.4 L477.1,717.7 L476.6,715.1 L476.2,712.5 L476.0,710.0 L476.1,707.6 L476.4,705.3 L476.9,703.2 L477.6,701.3 L478.6,699.7 L479.7,698.3 L481.1,697.2 L482.7,696.3 L484.4,695.8 L486.3,695.5 L488.3,695.5 L490.4,695.8 L492.6,696.4 L494.8,697.3 L497.1,698.4 L499.3,699.7 L501.5,701.3 L503.6,703.0 L505.6,704.8 L507.5,706.8" fill="none" stroke="#f4500e" stroke-width="4.2" stroke-linecap="butt"/>
<path d="M458.5,741.7 L457.5,739.4 L456.7,737.1 L456.0,734.7 L455.4,732.3 L455.0,729.9 L454.7,727.5 L454.6,725.2 L454.6,723.0 L454.9,720.8 L455.3,718.8 L455.9,717.0 L456.7,715.3 L457.7,713.8 L458.8,712.5 L460.1,711.5 L461.5,710.6 L463.1,710.0 L464.8,709.6 L466.5,709.5 L468.4,709.6 L470.3,710.0 L472.2,710.6 L474.2,711.4 L476.2,712.3 L478.2,713.5 L480.2,714.9 L482.1,716.3 L484.0,717.9" fill="none" stroke="#1a0800" stroke-width="9.600000000000001" stroke-linecap="butt"/>
<path d="M460.3,745.2 L459.1,742.9 L458.0,740.4 L457.0,737.8 L456.1,735.2 L455.4,732.5 L454.9,729.8 L454.7,727.1 L454.6,724.6 L454.7,722.1 L455.1,719.8 L455.7,717.6 L456.5,715.7 L457.5,714.0 L458.8,712.5 L460.2,711.4 L461.9,710.5 L463.7,709.8 L465.6,709.5 L467.6,709.6 L469.7,709.9 L471.9,710.5 L474.2,711.3 L476.4,712.4 L478.6,713.8 L480.8,715.3 L482.9,717.0 L485.0,718.9 L486.9,720.8" fill="none" stroke="#d03c08" stroke-width="7.4" stroke-linecap="butt"/>
<path d="M460.3,745.2 L459.1,742.9 L458.0,740.4 L457.0,737.8 L456.1,735.2 L455.4,732.5 L454.9,729.8 L454.7,727.1 L454.6,724.6 L454.7,722.1 L455.1,719.8 L455.7,717.6 L456.5,715.7 L457.5,714.0 L458.8,712.5 L460.2,711.4 L461.9,710.5 L463.7,709.8 L465.6,709.5 L467.6,709.6 L469.7,709.9 L471.9,710.5 L474.2,711.3 L476.4,712.4 L478.6,713.8 L480.8,715.3 L482.9,717.0 L485.0,718.9 L486.9,720.8" fill="none" stroke="#f4500e" stroke-width="4.2" stroke-linecap="butt"/>
<path d="M452.7,745.6 L451.3,743.6 L450.1,741.6 L448.9,739.5 L447.9,737.4 L447.1,735.3 L446.4,733.2 L445.9,731.1 L445.5,729.2 L445.3,727.3 L445.3,725.6 L445.5,724.0 L445.9,722.7 L446.5,721.4 L447.2,720.4 L448.0,719.6 L449.1,719.1 L450.2,718.7 L451.5,718.6 L452.9,718.8 L454.4,719.1 L456.0,719.7 L457.6,720.5 L459.3,721.5 L460.9,722.7 L462.6,724.1 L464.2,725.7 L465.8,727.4 L467.3,729.3" fill="none" stroke="#1a0800" stroke-width="9.600000000000001" stroke-linecap="butt"/>
<path d="M455.1,748.7 L453.5,746.7 L451.9,744.5 L450.4,742.3 L449.1,739.9 L448.0,737.5 L447.0,735.2 L446.3,732.8 L445.7,730.6 L445.4,728.4 L445.3,726.4 L445.4,724.6 L445.8,723.0 L446.4,721.6 L447.2,720.4 L448.2,719.6 L449.3,719.0 L450.7,718.7 L452.2,718.7 L453.8,718.9 L455.6,719.5 L457.4,720.4 L459.2,721.5 L461.1,722.8 L462.9,724.4 L464.7,726.2 L466.5,728.2 L468.1,730.3 L469.6,732.5" fill="none" stroke="#d03c08" stroke-width="7.4" stroke-linecap="butt"/>
<path d="M455.1,748.7 L453.5,746.7 L451.9,744.5 L450.4,742.3 L449.1,739.9 L448.0,737.5 L447.0,735.2 L446.3,732.8 L445.7,730.6 L445.4,728.4 L445.3,726.4 L445.4,724.6 L445.8,723.0 L446.4,721.6 L447.2,720.4 L448.2,719.6 L449.3,719.0 L450.7,718.7 L452.2,718.7 L453.8,718.9 L455.6,719.5 L457.4,720.4 L459.2,721.5 L461.1,722.8 L462.9,724.4 L464.7,726.2 L466.5,728.2 L468.1,730.3 L469.6,732.5" fill="none" stroke="#f4500e" stroke-width="4.2" stroke-linecap="butt"/>
<path d="M450.6,719.2 L451.1,719.2 L451.6,719.3 L452.1,719.3 L452.6,719.5 L453.1,719.6 L453.7,719.8 L454.2,720.0 L454.8,720.2 L455.3,720.4 L455.9,720.7 L456.5,721.0 L457.1,721.4 L457.7,721.7 L458.2,722.1 L458.8,722.6 L459.4,723.0 L460.0,723.5 L460.6,724.0 L461.2,724.5 L461.8,725.0 L462.3,725.6 L462.9,726.2 L463.5,726.8 L464.0,727.4 L464.6,728.0 L465.1,728.7 L465.7,729.3 L466.2,730.0" fill="none" stroke="#1a0800" stroke-width="9.600000000000001" stroke-linecap="butt"/>
<path d="M450.6,719.2 L451.1,719.2 L451.7,719.3 L452.3,719.4 L452.9,719.5 L453.6,719.7 L454.2,720.0 L454.9,720.2 L455.5,720.5 L456.2,720.9 L456.9,721.3 L457.6,721.7 L458.2,722.1 L458.9,722.6 L459.6,723.2 L460.3,723.7 L461.0,724.3 L461.7,724.9 L462.3,725.6 L463.0,726.3 L463.7,727.0 L464.3,727.7 L465.0,728.5 L465.6,729.2 L466.2,730.0 L466.8,730.8 L467.4,731.7 L467.9,732.5 L468.5,733.3" fill="none" stroke="#d03c08" stroke-width="7.4" stroke-linecap="butt"/>
<path d="M450.6,719.2 L451.1,719.2 L451.7,719.3 L452.3,719.4 L452.9,719.5 L453.6,719.7 L454.2,720.0 L454.9,720.2 L455.5,720.5 L456.2,720.9 L456.9,721.3 L457.6,721.7 L458.2,722.1 L458.9,722.6 L459.6,723.2 L460.3,723.7 L461.0,724.3 L461.7,724.9 L462.3,725.6 L463.0,726.3 L463.7,727.0 L464.3,727.7 L465.0,728.5 L465.6,729.2 L466.2,730.0 L466.8,730.8 L467.4,731.7 L467.9,732.5 L468.5,733.3" fill="none" stroke="#f4500e" stroke-width="4.2" stroke-linecap="butt"/>
<path d="M528.4,687.8 L529.3,689.0 L530.1,690.3 L531.0,691.6 L531.7,692.9 L532.5,694.2 L533.1,695.6 L533.7,696.9 L534.3,698.2 L534.8,699.6 L535.2,700.9 L535.5,702.1 L535.8,703.4 L536.0,704.6 L536.1,705.7 L536.1,706.8 L536.1,707.9 L536.0,708.8 L535.8,709.7 L535.6,710.6 L535.3,711.3 L534.9,712.0 L534.4,712.6 L533.9,713.1 L533.3,713.5 L532.7,713.8 L532.0,714.1 L531.2,714.2 L530.4,714.2" fill="none" stroke="#1a0800" stroke-width="9.600000000000001" stroke-linecap="butt"/>
<path d="M525.8,684.7 L526.9,686.0 L528.0,687.2 L529.0,688.6 L529.9,690.0 L530.8,691.4 L531.7,692.8 L532.5,694.3 L533.2,695.7 L533.9,697.2 L534.4,698.6 L534.9,700.1 L535.3,701.5 L535.7,702.9 L535.9,704.2 L536.1,705.5 L536.1,706.7 L536.1,707.8 L536.0,708.9 L535.8,709.9 L535.5,710.8 L535.1,711.6 L534.7,712.3 L534.1,712.9 L533.5,713.4 L532.9,713.8 L532.1,714.0 L531.3,714.2 L530.4,714.2" fill="none" stroke="#d03c08" stroke-width="7.4" stroke-linecap="butt"/>
<path d="M525.8,684.7 L526.9,686.0 L528.0,687.2 L529.0,688.6 L529.9,690.0 L530.8,691.4 L531.7,692.8 L532.5,694.3 L533.2,695.7 L533.9,697.2 L534.4,698.6 L534.9,700.1 L535.3,701.5 L535.7,702.9 L535.9,704.2 L536.1,705.5 L536.1,706.7 L536.1,707.8 L536.0,708.9 L535.8,709.9 L535.5,710.8 L535.1,711.6 L534.7,712.3 L534.1,712.9 L533.5,713.4 L532.9,713.8 L532.1,714.0 L531.3,714.2 L530.4,714.2" fill="none" stroke="#f4500e" stroke-width="4.2" stroke-linecap="butt"/>
<path d="M524.3,690.5 L525.9,692.4 L527.3,694.3 L528.6,696.3 L529.8,698.3 L530.8,700.3 L531.7,702.2 L532.4,704.2 L532.9,706.0 L533.3,707.7 L533.4,709.3 L533.4,710.8 L533.2,712.0 L532.8,713.1 L532.3,714.0 L531.6,714.7 L530.8,715.1 L529.8,715.3 L528.7,715.3 L527.3,715.2 L525.9,714.8 L524.4,714.1 L522.8,713.3 L521.3,712.2 L519.7,710.9 L518.1,709.5 L516.5,707.9 L515.0,706.1 L513.6,704.2" fill="none" stroke="#1a0800" stroke-width="9.600000000000001" stroke-linecap="butt"/>
<path d="M521.6,687.6 L523.4,689.5 L525.2,691.5 L526.8,693.7 L528.4,695.9 L529.7,698.1 L530.8,700.4 L531.8,702.6 L532.5,704.7 L533.1,706.7 L533.4,708.6 L533.4,710.3 L533.3,711.7 L532.9,713.0 L532.3,714.0 L531.5,714.7 L530.5,715.2 L529.4,715.4 L528.0,715.3 L526.5,714.9 L524.8,714.3 L523.1,713.4 L521.3,712.2 L519.5,710.8 L517.8,709.2 L516.1,707.3 L514.4,705.3 L512.8,703.1 L511.4,700.8" fill="none" stroke="#d03c08" stroke-width="7.4" stroke-linecap="butt"/>
<path d="M521.6,687.6 L523.4,689.5 L525.2,691.5 L526.8,693.7 L528.4,695.9 L529.7,698.1 L530.8,700.4 L531.8,702.6 L532.5,704.7 L533.1,706.7 L533.4,708.6 L533.4,710.3 L533.3,711.7 L532.9,713.0 L532.3,714.0 L531.5,714.7 L530.5,715.2 L529.4,715.4 L528.0,715.3 L526.5,714.9 L524.8,714.3 L523.1,713.4 L521.3,712.2 L519.5,710.8 L517.8,709.2 L516.1,707.3 L514.4,705.3 L512.8,703.1 L511.4,700.8" fill="none" stroke="#f4500e" stroke-width="4.2" stroke-linecap="butt"/>
<path d="M504.6,703.9 L506.4,705.6 L508.1,707.4 L509.6,709.2 L511.0,711.1 L512.2,712.9 L513.3,714.7 L514.2,716.5 L515.0,718.2 L515.6,719.7 L516.0,721.2 L516.2,722.5 L516.2,723.6 L516.0,724.5 L515.7,725.3 L515.2,725.8 L514.6,726.1 L513.9,726.2 L513.0,726.0 L512.0,725.6 L510.9,724.9 L509.8,724.0 L508.6,722.9 L507.4,721.6 L506.2,720.1 L505.0,718.4 L503.8,716.5 L502.7,714.5 L501.6,712.4" fill="none" stroke="#1a0800" stroke-width="9.600000000000001" stroke-linecap="butt"/>
<path d="M501.5,701.3 L503.6,703.0 L505.6,704.8 L507.5,706.8 L509.3,708.8 L510.9,710.9 L512.3,713.0 L513.5,715.0 L514.5,717.0 L515.2,718.8 L515.8,720.5 L516.1,722.0 L516.2,723.4 L516.1,724.4 L515.7,725.3 L515.2,725.8 L514.5,726.1 L513.6,726.1 L512.5,725.8 L511.4,725.2 L510.1,724.3 L508.8,723.1 L507.5,721.7 L506.1,720.0 L504.8,718.0 L503.4,715.9 L502.2,713.6 L501.1,711.1 L500.0,708.6" fill="none" stroke="#d03c08" stroke-width="7.4" stroke-linecap="butt"/>
<path d="M501.5,701.3 L503.6,703.0 L505.6,704.8 L507.5,706.8 L509.3,708.8 L510.9,710.9 L512.3,713.0 L513.5,715.0 L514.5,717.0 L515.2,718.8 L515.8,720.5 L516.1,722.0 L516.2,723.4 L516.1,724.4 L515.7,725.3 L515.2,725.8 L514.5,726.1 L513.6,726.1 L512.5,725.8 L511.4,725.2 L510.1,724.3 L508.8,723.1 L507.5,721.7 L506.1,720.0 L504.8,718.0 L503.4,715.9 L502.2,713.6 L501.1,711.1 L500.0,708.6" fill="none" stroke="#f4500e" stroke-width="4.2" stroke-linecap="butt"/>
<path d="M484.0,717.9 L485.7,719.6 L487.4,721.4 L488.9,723.2 L490.3,725.1 L491.6,726.9 L492.7,728.8 L493.6,730.5 L494.3,732.2 L494.9,733.8 L495.3,735.2 L495.5,736.5 L495.5,737.7 L495.4,738.6 L495.0,739.3 L494.6,739.9 L493.9,740.1 L493.2,740.2 L492.3,740.0 L491.3,739.7 L490.2,739.0 L489.0,738.2 L487.8,737.1 L486.5,735.8 L485.3,734.3 L484.0,732.6 L482.8,730.8 L481.6,728.8 L480.5,726.7" fill="none" stroke="#1a0800" stroke-width="9.600000000000001" stroke-linecap="butt"/>
<path d="M480.8,715.3 L482.9,717.0 L485.0,718.9 L486.9,720.8 L488.6,722.9 L490.2,725.0 L491.6,727.0 L492.8,729.1 L493.8,731.0 L494.6,732.9 L495.1,734.6 L495.4,736.1 L495.5,737.4 L495.4,738.5 L495.0,739.3 L494.5,739.9 L493.8,740.2 L492.9,740.2 L491.8,739.9 L490.6,739.3 L489.3,738.4 L488.0,737.3 L486.6,735.9 L485.2,734.2 L483.8,732.3 L482.4,730.2 L481.1,727.9 L479.9,725.5 L478.8,723.0" fill="none" stroke="#d03c08" stroke-width="7.4" stroke-linecap="butt"/>
<path d="M480.8,715.3 L482.9,717.0 L485.0,718.9 L486.9,720.8 L488.6,722.9 L490.2,725.0 L491.6,727.0 L492.8,729.1 L493.8,731.0 L494.6,732.9 L495.1,734.6 L495.4,736.1 L495.5,737.4 L495.4,738.5 L495.0,739.3 L494.5,739.9 L493.8,740.2 L492.9,740.2 L491.8,739.9 L490.6,739.3 L489.3,738.4 L488.0,737.3 L486.6,735.9 L485.2,734.2 L483.8,732.3 L482.4,730.2 L481.1,727.9 L479.9,725.5 L478.8,723.0" fill="none" stroke="#f4500e" stroke-width="4.2" stroke-linecap="butt"/>
<path d="M467.3,729.3 L468.7,731.2 L470.0,733.2 L471.2,735.3 L472.3,737.3 L473.2,739.4 L474.0,741.5 L474.5,743.5 L474.9,745.4 L475.2,747.2 L475.2,748.9 L475.1,750.4 L474.8,751.7 L474.3,752.9 L473.6,753.9 L472.8,754.6 L471.9,755.2 L470.8,755.5 L469.6,755.5 L468.6,755.1 L467.6,754.4 L466.5,753.5 L465.3,752.3 L464.2,751.0 L463.0,749.5 L461.8,747.7 L460.6,745.9 L459.5,743.8 L458.5,741.7" fill="none" stroke="#1a0800" stroke-width="9.600000000000001" stroke-linecap="butt"/>
<path d="M464.7,726.2 L466.5,728.2 L468.1,730.3 L469.6,732.5 L471.0,734.8 L472.2,737.2 L473.2,739.5 L474.1,741.8 L474.7,744.0 L475.1,746.1 L475.2,748.1 L475.2,749.9 L474.9,751.4 L474.4,752.8 L473.6,753.9 L472.7,754.7 L471.6,755.3 L470.3,755.5 L469.1,755.3 L468.0,754.7 L466.8,753.7 L465.5,752.5 L464.2,751.1 L462.9,749.3 L461.5,747.4 L460.3,745.2 L459.1,742.9 L458.0,740.4 L457.0,737.8" fill="none" stroke="#d03c08" stroke-width="7.4" stroke-linecap="butt"/>
<path d="M464.7,726.2 L466.5,728.2 L468.1,730.3 L469.6,732.5 L471.0,734.8 L472.2,737.2 L473.2,739.5 L474.1,741.8 L474.7,744.0 L475.1,746.1 L475.2,748.1 L475.2,749.9 L474.9,751.4 L474.4,752.8 L473.6,753.9 L472.7,754.7 L471.6,755.3 L470.3,755.5 L469.1,755.3 L468.0,754.7 L466.8,753.7 L465.5,752.5 L464.2,751.1 L462.9,749.3 L461.5,747.4 L460.3,745.2 L459.1,742.9 L458.0,740.4 L457.0,737.8" fill="none" stroke="#f4500e" stroke-width="4.2" stroke-linecap="butt"/>
<path d="M466.2,730.0 L467.6,732.0 L468.9,734.0 L470.0,736.1 L471.1,738.2 L471.9,740.3 L472.7,742.4 L473.2,744.4 L473.6,746.3 L473.8,748.1 L473.8,749.8 L473.6,751.4 L473.3,752.7 L472.8,753.9 L472.1,754.9 L471.3,755.7 L470.3,756.2 L469.1,756.6 L467.9,756.6 L466.5,756.5 L465.1,756.1 L463.6,755.5 L462.0,754.6 L460.4,753.6 L458.8,752.3 L457.2,750.9 L455.6,749.2 L454.1,747.5 L452.7,745.6" fill="none" stroke="#1a0800" stroke-width="9.600000000000001" stroke-linecap="butt"/>
<path d="M463.7,727.0 L465.4,729.0 L467.0,731.1 L468.5,733.3 L469.8,735.7 L471.0,738.0 L472.0,740.4 L472.8,742.7 L473.3,744.9 L473.7,747.0 L473.8,749.0 L473.7,750.8 L473.4,752.4 L472.9,753.8 L472.1,754.9 L471.1,755.8 L470.0,756.3 L468.7,756.6 L467.2,756.6 L465.7,756.3 L464.0,755.7 L462.3,754.8 L460.5,753.6 L458.7,752.2 L456.9,750.5 L455.1,748.7 L453.5,746.7 L451.9,744.5 L450.4,742.3" fill="none" stroke="#d03c08" stroke-width="7.4" stroke-linecap="butt"/>
<path d="M463.7,727.0 L465.4,729.0 L467.0,731.1 L468.5,733.3 L469.8,735.7 L471.0,738.0 L472.0,740.4 L472.8,742.7 L473.3,744.9 L473.7,747.0 L473.8,749.0 L473.7,750.8 L473.4,752.4 L472.9,753.8 L472.1,754.9 L471.1,755.8 L470.0,756.3 L468.7,756.6 L467.2,756.6 L465.7,756.3 L464.0,755.7 L462.3,754.8 L460.5,753.6 L458.7,752.2 L456.9,750.5 L455.1,748.7 L453.5,746.7 L451.9,744.5 L450.4,742.3" fill="none" stroke="#f4500e" stroke-width="4.2" stroke-linecap="butt"/>
<!--/VIEWPORT-->
</svg>
</div>
</body>
</html>
